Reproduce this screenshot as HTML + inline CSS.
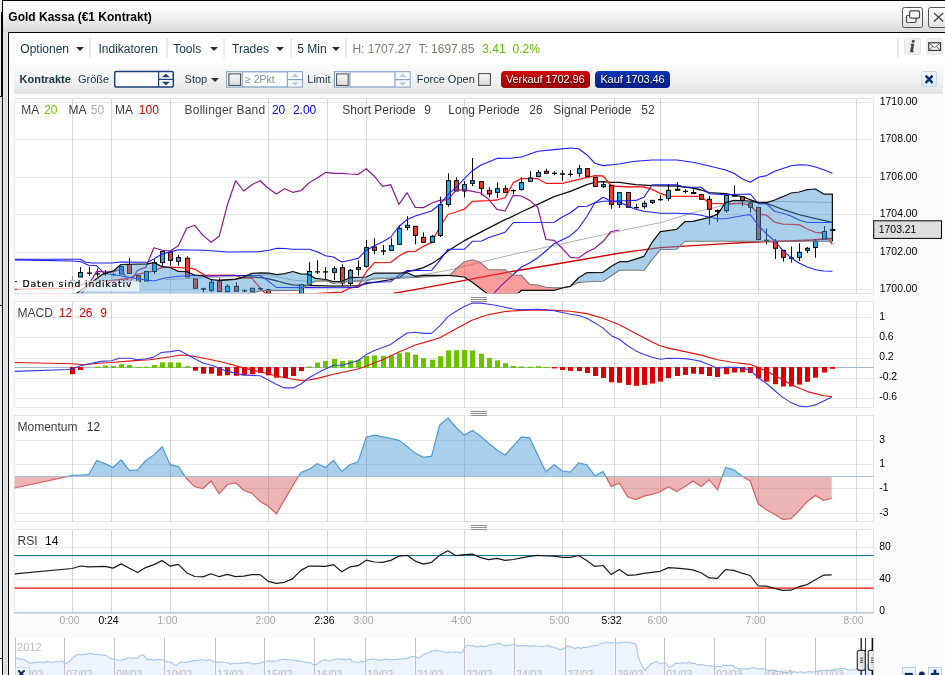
<!DOCTYPE html>
<html><head><meta charset="utf-8"><title>Gold Kassa</title>
<style>
html,body{margin:0;padding:0;}
body{width:945px;height:675px;overflow:hidden;position:relative;background:#fff;font-family:"Liberation Sans",sans-serif;font-size:12px;color:#222;}
.abs{position:absolute;}
#win{left:2px;top:0;width:960px;height:700px;border-left:1px solid #000;border-top:1px solid #000;background:#dddddd;}
#titlebar{left:3px;top:1px;width:942px;height:31px;background:linear-gradient(#ffffff 0%,#fbfbfb 25%,#ededed 60%,#d9d9d9 100%);}
#title{left:8.3px;top:10px;font-weight:bold;font-size:12px;color:#000;white-space:nowrap;}
#panel{left:8px;top:32px;width:940px;height:660px;border-left:1px solid #000;border-top:1px solid #000;background:#fbfbfb;}
#tbbg{left:9px;top:33px;width:936px;height:30px;background:#fff;}
.tb{top:42px;font-size:12px;line-height:14px;color:#123444;white-space:nowrap;}
.sep{top:38px;width:2px;height:20px;background:#ebebeb;}
.arr{width:0;height:0;border-left:4px solid transparent;border-right:4px solid transparent;border-top:4.6px solid #2e2e2e;top:46.6px;margin-left:0.3px;}
#orderbar{left:14px;top:63px;width:929px;height:31px;background:linear-gradient(#fcfcfc 0%,#f4f4f4 45%,#e3e3e3 100%);}
.ob{top:72.5px;font-size:11px;line-height:13px;color:#123444;white-space:nowrap;}
.wbtn{top:7px;height:19px;border:1px solid #555;border-radius:2.5px;background:linear-gradient(#ffffff,#e2e2e2);}
.ibtn{top:38px;width:16.5px;height:16.5px;border-radius:3px;background:#f0f0f0;border:1px solid #e6e6e6;box-sizing:border-box;}
.inp{top:70.5px;height:16.5px;border:1px solid #9ab0cf;background:#fff;}
.cb{width:11px;height:11px;border:1px solid #555;border-radius:2px;background:linear-gradient(#fdfdfd,#dadada);}
.btn{top:70.5px;height:17.5px;border-radius:4px;color:#fff;font-size:11px;line-height:17px;text-align:center;white-space:nowrap;text-shadow:0 1px 1px rgba(0,0,0,0.85);letter-spacing:-0.1px;}
#root{left:0;top:0;width:945px;height:675px;overflow:hidden;will-change:transform;}
</style></head><body>
<div id="root" class="abs">
<div id="win" class="abs"></div>
<div class="abs" style="left:0;top:0;width:2px;height:12px;background:#ececec"></div>
<div class="abs" style="left:0;top:12px;width:1px;height:84px;background:#eeeeee"></div>
<div class="abs" style="left:1px;top:12px;width:1px;height:85px;background:#000"></div>
<div class="abs" style="left:0;top:96px;width:2px;height:1px;background:#000"></div>
<div class="abs" style="left:0;top:97px;width:2px;height:208px;background:#e1e1e1"></div>
<div class="abs" style="left:0;top:305px;width:2px;height:1px;background:#000"></div>
<div class="abs" style="left:0;top:306px;width:2px;height:352px;background:#e6ecf2"></div>
<div class="abs" style="left:0;top:658px;width:2px;height:1px;background:#000"></div>
<div class="abs" style="left:0;top:659px;width:2px;height:20px;background:#fff"></div>
<div class="abs" style="left:3px;top:32px;width:1px;height:650px;background:#ececec"></div>
<div class="abs" style="left:7px;top:32px;width:1px;height:650px;background:#ececec"></div>
<div id="titlebar" class="abs"></div>
<div id="title" class="abs">Gold Kassa (€1 Kontrakt)</div>
<div class="abs wbtn" style="left:902px;width:19px;"></div>
<div class="abs wbtn" style="left:928px;width:24px;"></div>
<svg class="abs" style="left:900px;top:5px" width="45" height="26" viewBox="900 5 45 26">
<rect x="906.5" y="15.5" width="9.5" height="7" rx="1.2" fill="#f2f2f2" stroke="#444" stroke-width="1.2"/>
<rect x="909.7" y="10.8" width="9.8" height="7.4" rx="1.2" fill="#fff" stroke="#444" stroke-width="1.2"/>
<path d="M934 13 L943.2 21.5 M943.2 13 L934 21.5" stroke="#444" stroke-width="1.3" fill="none"/>
</svg>
<div id="panel" class="abs"></div>
<div id="tbbg" class="abs"></div>
<!--TOOLBAR-->
<div class="abs tb" style="left:20.3px">Optionen</div><div class="abs arr" style="left:75.4px"></div>
<div class="abs sep" style="left:88.5px"></div>
<div class="abs tb" style="left:98.5px">Indikatoren</div>
<div class="abs sep" style="left:165.5px"></div>
<div class="abs tb" style="left:173.2px">Tools</div><div class="abs arr" style="left:209.5px"></div>
<div class="abs sep" style="left:223.2px"></div>
<div class="abs tb" style="left:232px">Trades</div><div class="abs arr" style="left:275.7px"></div>
<div class="abs sep" style="left:289.6px"></div>
<div class="abs tb" style="left:297.3px">5 Min</div><div class="abs arr" style="left:331.6px"></div>
<div class="abs sep" style="left:345.2px"></div>
<div class="abs tb" style="left:352.4px;color:#7d7d6e">H: 1707.27</div>
<div class="abs tb" style="left:418.4px;color:#7d7d6e">T: 1697.85</div>
<div class="abs tb" style="left:482.3px;color:#66bb00">3.41</div>
<div class="abs tb" style="left:512.6px;color:#66bb00">0.2%</div>
<div class="abs sep" style="left:897px"></div>
<div class="abs ibtn" style="left:904.3px"></div>
<div class="abs ibtn" style="left:926.4px"></div>
<div class="abs" style="left:910px;top:38px;font-family:'Liberation Serif',serif;font-style:italic;font-weight:bold;font-size:16px;line-height:17px;color:#444;-webkit-text-stroke:0.6px #444;">i</div>
<svg class="abs" style="left:926px;top:38px" width="18" height="17" viewBox="926 38 18 17">
<rect x="928.7" y="42.8" width="11.8" height="7.6" fill="#fff" stroke="#444" stroke-width="1.3"/>
<path d="M929 43.2 L934.6 47.6 L940.2 43.2 M929 50 L933 46.4 M940.2 50 L936.2 46.4" stroke="#555" stroke-width="0.9" fill="none"/>
</svg>
<!--ORDERBAR-->
<div id="orderbar" class="abs"></div>
<div class="abs ob" style="left:19.5px;font-weight:bold">Kontrakte</div>
<div class="abs ob" style="left:78px">Größe</div>
<div class="abs ob" style="left:184.6px">Stop</div><div class="abs arr" style="left:210.6px;top:77.6px"></div>
<div class="abs ob" style="left:307.3px">Limit</div>
<div class="abs ob" style="left:416.7px">Force Open</div>
<svg class="abs" style="left:0;top:60px" width="945" height="36" viewBox="0 60 945 36">
<defs><linearGradient id="cbg" x1="0" x2="0" y1="0" y2="1"><stop offset="0" stop-color="#fbfbfb"/><stop offset="1" stop-color="#d9d9d9"/></linearGradient></defs>
<rect x="114.7" y="71.6" width="58.6" height="15.4" rx="1.5" fill="#fff" stroke="#1c3d7c" stroke-width="1.5"/>
<line x1="158.6" x2="158.6" y1="71.6" y2="87" stroke="#1c3d7c" stroke-width="1.2"/>
<line x1="158.6" x2="173.3" y1="79.4" y2="79.4" stroke="#1c3d7c" stroke-width="1.2"/>
<path d="M161.9 77.2 L165.9 73.7 L169.9 77.2 Z M161.9 81.8 L165.9 85.3 L169.9 81.8 Z" fill="#1c3d7c"/>
<g>
<rect x="226.7" y="71.8" width="75.6" height="15.2" fill="#fff" stroke="#7f9cc6" stroke-width="1.2"/>
<rect x="227.3" y="72.4" width="14.6" height="14" fill="#eef2f8"/>
<line x1="242.2" x2="242.2" y1="71.8" y2="87" stroke="#7f9cc6" stroke-width="1.1"/>
<rect x="228.9" y="73.9" width="11.6" height="11.6" fill="url(#cbg)" stroke="#555" stroke-width="1.1"/>
<rect x="287.8" y="72.4" width="14" height="14" fill="#f6f8fb"/>
<line x1="287.3" x2="287.3" y1="71.8" y2="87" stroke="#7f9cc6" stroke-width="1.1"/>
<line x1="287.3" x2="302.3" y1="79.6" y2="79.6" stroke="#7f9cc6" stroke-width="1.1"/>
<path d="M291.2 77 L295 73.8 L298.8 77 Z M291.2 82.2 L295 85.4 L298.8 82.2 Z" fill="#b9c7da"/>
</g>
<g transform="translate(107.7 0)">
<rect x="226.7" y="71.8" width="75.6" height="15.2" fill="#fff" stroke="#7f9cc6" stroke-width="1.2"/>
<rect x="227.3" y="72.4" width="14.6" height="14" fill="#eef2f8"/>
<line x1="242.2" x2="242.2" y1="71.8" y2="87" stroke="#7f9cc6" stroke-width="1.1"/>
<rect x="228.9" y="73.9" width="11.6" height="11.6" fill="url(#cbg)" stroke="#555" stroke-width="1.1"/>
<rect x="287.8" y="72.4" width="14" height="14" fill="#f6f8fb"/>
<line x1="287.3" x2="287.3" y1="71.8" y2="87" stroke="#7f9cc6" stroke-width="1.1"/>
<line x1="287.3" x2="302.3" y1="79.6" y2="79.6" stroke="#7f9cc6" stroke-width="1.1"/>
<path d="M291.2 77 L295 73.8 L298.8 77 Z M291.2 82.2 L295 85.4 L298.8 82.2 Z" fill="#b9c7da"/>
</g>
<rect x="478.6" y="73.6" width="11.8" height="11.8" fill="url(#cbg)" stroke="#555" stroke-width="1.1"/>
</svg>
<div class="abs ob" style="left:245px;color:#7d9499;font-size:10.5px">≥ 2Pkt</div>
<div class="abs btn" style="left:500.5px;width:89.5px;background:linear-gradient(#d00c0c,#9a0000);">Verkauf 1702.96</div>
<div class="abs btn" style="left:595px;width:75px;background:linear-gradient(#0d38b4,#041e84);">Kauf 1703.46</div>
<div class="abs" style="left:921px;top:71px;width:14px;height:14px;border:1px solid #c3d9ee;border-radius:2px;box-sizing:content-box;background:linear-gradient(#f4f9fd,#d6e6f5);"></div>
<svg class="abs" style="left:921px;top:71px" width="17" height="17" viewBox="921 71 17 17">
<path d="M925.6 75.6 L932.6 82.8 M932.6 75.6 L925.6 82.8" stroke="#0c2a66" stroke-width="2.4" fill="none"/>
</svg>
<svg class="abs" style="left:0;top:0" width="945" height="675" viewBox="0 0 945 675" font-family="Liberation Sans, sans-serif">
<defs><clipPath id="cm"><rect x="14.5" y="98.5" width="859" height="194.8"/></clipPath></defs>
<rect x="14.5" y="98.5" width="859" height="195" fill="#fff" stroke="#e6e6e6" stroke-width="1" shape-rendering="crispEdges"/>
<line x1="14.5" x2="873.5" y1="102.5" y2="102.5" stroke="#e6e6e6" stroke-width="1" shape-rendering="crispEdges"/>
<line x1="14.5" x2="873.5" y1="139.5" y2="139.5" stroke="#e6e6e6" stroke-width="1" shape-rendering="crispEdges"/>
<line x1="14.5" x2="873.5" y1="177.5" y2="177.5" stroke="#e6e6e6" stroke-width="1" shape-rendering="crispEdges"/>
<line x1="14.5" x2="873.5" y1="214.5" y2="214.5" stroke="#e6e6e6" stroke-width="1" shape-rendering="crispEdges"/>
<line x1="14.5" x2="873.5" y1="252.5" y2="252.5" stroke="#e6e6e6" stroke-width="1" shape-rendering="crispEdges"/>
<line x1="14.5" x2="873.5" y1="289.5" y2="289.5" stroke="#e6e6e6" stroke-width="1" shape-rendering="crispEdges"/>
<line x1="72.5" x2="72.5" y1="98.5" y2="293.5" stroke="#d6d6d6" stroke-width="1" shape-rendering="crispEdges"/>
<line x1="111.5" x2="111.5" y1="98.5" y2="293.5" stroke="#d6d6d6" stroke-width="1" shape-rendering="crispEdges"/>
<line x1="170.5" x2="170.5" y1="98.5" y2="293.5" stroke="#d6d6d6" stroke-width="1" shape-rendering="crispEdges"/>
<line x1="268.5" x2="268.5" y1="98.5" y2="293.5" stroke="#d6d6d6" stroke-width="1" shape-rendering="crispEdges"/>
<line x1="327.5" x2="327.5" y1="98.5" y2="293.5" stroke="#d6d6d6" stroke-width="1" shape-rendering="crispEdges"/>
<line x1="366.5" x2="366.5" y1="98.5" y2="293.5" stroke="#d6d6d6" stroke-width="1" shape-rendering="crispEdges"/>
<line x1="464.5" x2="464.5" y1="98.5" y2="293.5" stroke="#d6d6d6" stroke-width="1" shape-rendering="crispEdges"/>
<line x1="562.5" x2="562.5" y1="98.5" y2="293.5" stroke="#d6d6d6" stroke-width="1" shape-rendering="crispEdges"/>
<line x1="614.5" x2="614.5" y1="98.5" y2="293.5" stroke="#d6d6d6" stroke-width="1" shape-rendering="crispEdges"/>
<line x1="660.5" x2="660.5" y1="98.5" y2="293.5" stroke="#d6d6d6" stroke-width="1" shape-rendering="crispEdges"/>
<line x1="758.5" x2="758.5" y1="98.5" y2="293.5" stroke="#d6d6d6" stroke-width="1" shape-rendering="crispEdges"/>
<line x1="856.5" x2="856.5" y1="98.5" y2="293.5" stroke="#d6d6d6" stroke-width="1" shape-rendering="crispEdges"/>
<rect x="14.5" y="301.5" width="859" height="106" fill="#fff" stroke="#e6e6e6" stroke-width="1" shape-rendering="crispEdges"/>
<line x1="14.5" x2="873.5" y1="317.5" y2="317.5" stroke="#e6e6e6" stroke-width="1" shape-rendering="crispEdges"/>
<line x1="14.5" x2="873.5" y1="337.5" y2="337.5" stroke="#e6e6e6" stroke-width="1" shape-rendering="crispEdges"/>
<line x1="14.5" x2="873.5" y1="358.5" y2="358.5" stroke="#e6e6e6" stroke-width="1" shape-rendering="crispEdges"/>
<line x1="14.5" x2="873.5" y1="378.5" y2="378.5" stroke="#e6e6e6" stroke-width="1" shape-rendering="crispEdges"/>
<line x1="14.5" x2="873.5" y1="398.5" y2="398.5" stroke="#e6e6e6" stroke-width="1" shape-rendering="crispEdges"/>
<line x1="72.5" x2="72.5" y1="301.5" y2="407.5" stroke="#d6d6d6" stroke-width="1" shape-rendering="crispEdges"/>
<line x1="111.5" x2="111.5" y1="301.5" y2="407.5" stroke="#d6d6d6" stroke-width="1" shape-rendering="crispEdges"/>
<line x1="170.5" x2="170.5" y1="301.5" y2="407.5" stroke="#d6d6d6" stroke-width="1" shape-rendering="crispEdges"/>
<line x1="268.5" x2="268.5" y1="301.5" y2="407.5" stroke="#d6d6d6" stroke-width="1" shape-rendering="crispEdges"/>
<line x1="327.5" x2="327.5" y1="301.5" y2="407.5" stroke="#d6d6d6" stroke-width="1" shape-rendering="crispEdges"/>
<line x1="366.5" x2="366.5" y1="301.5" y2="407.5" stroke="#d6d6d6" stroke-width="1" shape-rendering="crispEdges"/>
<line x1="464.5" x2="464.5" y1="301.5" y2="407.5" stroke="#d6d6d6" stroke-width="1" shape-rendering="crispEdges"/>
<line x1="562.5" x2="562.5" y1="301.5" y2="407.5" stroke="#d6d6d6" stroke-width="1" shape-rendering="crispEdges"/>
<line x1="614.5" x2="614.5" y1="301.5" y2="407.5" stroke="#d6d6d6" stroke-width="1" shape-rendering="crispEdges"/>
<line x1="660.5" x2="660.5" y1="301.5" y2="407.5" stroke="#d6d6d6" stroke-width="1" shape-rendering="crispEdges"/>
<line x1="758.5" x2="758.5" y1="301.5" y2="407.5" stroke="#d6d6d6" stroke-width="1" shape-rendering="crispEdges"/>
<line x1="856.5" x2="856.5" y1="301.5" y2="407.5" stroke="#d6d6d6" stroke-width="1" shape-rendering="crispEdges"/>
<rect x="14.5" y="415.5" width="859" height="106" fill="#fff" stroke="#e6e6e6" stroke-width="1" shape-rendering="crispEdges"/>
<line x1="14.5" x2="873.5" y1="440.5" y2="440.5" stroke="#e6e6e6" stroke-width="1" shape-rendering="crispEdges"/>
<line x1="14.5" x2="873.5" y1="464.5" y2="464.5" stroke="#e6e6e6" stroke-width="1" shape-rendering="crispEdges"/>
<line x1="14.5" x2="873.5" y1="488.5" y2="488.5" stroke="#e6e6e6" stroke-width="1" shape-rendering="crispEdges"/>
<line x1="14.5" x2="873.5" y1="513.5" y2="513.5" stroke="#e6e6e6" stroke-width="1" shape-rendering="crispEdges"/>
<line x1="72.5" x2="72.5" y1="415.5" y2="521.5" stroke="#d6d6d6" stroke-width="1" shape-rendering="crispEdges"/>
<line x1="111.5" x2="111.5" y1="415.5" y2="521.5" stroke="#d6d6d6" stroke-width="1" shape-rendering="crispEdges"/>
<line x1="170.5" x2="170.5" y1="415.5" y2="521.5" stroke="#d6d6d6" stroke-width="1" shape-rendering="crispEdges"/>
<line x1="268.5" x2="268.5" y1="415.5" y2="521.5" stroke="#d6d6d6" stroke-width="1" shape-rendering="crispEdges"/>
<line x1="327.5" x2="327.5" y1="415.5" y2="521.5" stroke="#d6d6d6" stroke-width="1" shape-rendering="crispEdges"/>
<line x1="366.5" x2="366.5" y1="415.5" y2="521.5" stroke="#d6d6d6" stroke-width="1" shape-rendering="crispEdges"/>
<line x1="464.5" x2="464.5" y1="415.5" y2="521.5" stroke="#d6d6d6" stroke-width="1" shape-rendering="crispEdges"/>
<line x1="562.5" x2="562.5" y1="415.5" y2="521.5" stroke="#d6d6d6" stroke-width="1" shape-rendering="crispEdges"/>
<line x1="614.5" x2="614.5" y1="415.5" y2="521.5" stroke="#d6d6d6" stroke-width="1" shape-rendering="crispEdges"/>
<line x1="660.5" x2="660.5" y1="415.5" y2="521.5" stroke="#d6d6d6" stroke-width="1" shape-rendering="crispEdges"/>
<line x1="758.5" x2="758.5" y1="415.5" y2="521.5" stroke="#d6d6d6" stroke-width="1" shape-rendering="crispEdges"/>
<line x1="856.5" x2="856.5" y1="415.5" y2="521.5" stroke="#d6d6d6" stroke-width="1" shape-rendering="crispEdges"/>
<rect x="14.5" y="529.5" width="859" height="83" fill="#fff" stroke="#e6e6e6" stroke-width="1" shape-rendering="crispEdges"/>
<line x1="14.5" x2="873.5" y1="547.5" y2="547.5" stroke="#e6e6e6" stroke-width="1" shape-rendering="crispEdges"/>
<line x1="14.5" x2="873.5" y1="579.5" y2="579.5" stroke="#e6e6e6" stroke-width="1" shape-rendering="crispEdges"/>
<line x1="72.5" x2="72.5" y1="529.5" y2="612.5" stroke="#d6d6d6" stroke-width="1" shape-rendering="crispEdges"/>
<line x1="111.5" x2="111.5" y1="529.5" y2="612.5" stroke="#d6d6d6" stroke-width="1" shape-rendering="crispEdges"/>
<line x1="170.5" x2="170.5" y1="529.5" y2="612.5" stroke="#d6d6d6" stroke-width="1" shape-rendering="crispEdges"/>
<line x1="268.5" x2="268.5" y1="529.5" y2="612.5" stroke="#d6d6d6" stroke-width="1" shape-rendering="crispEdges"/>
<line x1="327.5" x2="327.5" y1="529.5" y2="612.5" stroke="#d6d6d6" stroke-width="1" shape-rendering="crispEdges"/>
<line x1="366.5" x2="366.5" y1="529.5" y2="612.5" stroke="#d6d6d6" stroke-width="1" shape-rendering="crispEdges"/>
<line x1="464.5" x2="464.5" y1="529.5" y2="612.5" stroke="#d6d6d6" stroke-width="1" shape-rendering="crispEdges"/>
<line x1="562.5" x2="562.5" y1="529.5" y2="612.5" stroke="#d6d6d6" stroke-width="1" shape-rendering="crispEdges"/>
<line x1="614.5" x2="614.5" y1="529.5" y2="612.5" stroke="#d6d6d6" stroke-width="1" shape-rendering="crispEdges"/>
<line x1="660.5" x2="660.5" y1="529.5" y2="612.5" stroke="#d6d6d6" stroke-width="1" shape-rendering="crispEdges"/>
<line x1="758.5" x2="758.5" y1="529.5" y2="612.5" stroke="#d6d6d6" stroke-width="1" shape-rendering="crispEdges"/>
<line x1="856.5" x2="856.5" y1="529.5" y2="612.5" stroke="#d6d6d6" stroke-width="1" shape-rendering="crispEdges"/>
<line x1="14.5" x2="873.5" y1="612.8" y2="612.8" stroke="#aebfd2" stroke-width="1.2"/>
<g clip-path="url(#cm)">
<polyline points="165.0,279.5 200.0,278.0 245.0,276.0 268.9,274.7 277.3,276.8 292.7,280.0 308.0,281.6 340.0,281.5 365.3,280.0 398.0,277.5 421.7,275.0 448.3,270.3 464.3,266.3 488.3,260.3 515.0,254.0 562.3,243.7 614.4,232.3 630.0,228.7 660.3,222.7 693.0,212.7 721.0,206.0 740.0,203.0 766.7,201.3 832.4,202.4" fill="none" stroke="#a8a8a8" stroke-width="0.9" stroke-linejoin="round" />
<polyline points="393.0,293.5 421.7,288.3 448.3,283.4 475.0,278.3 501.7,273.3 515.0,271.0 562.3,263.0 614.4,254.0 630.0,251.6 660.3,247.7 693.0,245.7 725.6,243.7 745.0,242.5 775.0,241.5 812.0,240.0 832.4,238.5" fill="none" stroke="#d40000" stroke-width="1.3" stroke-linejoin="round" />
<polyline points="219.3,280.3 235.4,279.2 245.0,277.5 250.9,276.8 260.4,277.7 268.9,278.9 277.3,281.0 284.7,283.2 292.7,284.8 300.6,285.3 308.7,285.5 326.0,285.8 335.0,286.1 358.1,285.7 366.7,283.7 390.7,279.7 400.0,277.0 407.1,271.7 415.3,270.0 423.4,267.7 431.6,263.7 439.8,258.3 447.9,251.0 456.0,245.7 464.3,240.7 481.7,231.7 505.0,219.7 510.0,217.6 521.4,212.0 537.8,204.3 554.1,196.7 570.4,191.3 586.8,184.7 594.9,182.4 603.1,181.6 611.3,182.4 619.4,182.4 630.0,183.8 635.8,184.7 652.1,185.7 676.6,186.0 693.0,188.0 701.1,190.0 709.3,192.7 725.6,193.7 742.0,196.7 758.4,202.7 766.7,203.3 782.8,209.3 799.0,214.7 815.5,218.7 832.4,222.3" fill="none" stroke="#111" stroke-width="1.3" stroke-linejoin="round" />
<polyline points="14.9,289.2 72.2,288.2 76.5,286.1 85.4,283.6 128.6,278.5 136.2,274.7 154.0,270.9 161.6,267.7 170.5,267.2 191.7,268.3 195.7,269.7 205.0,275.4 235.0,275.2 241.3,277.9 252.0,278.4 256.2,283.2 261.5,289.7 266.0,294.0 311.2,294.0 335.0,292.5 341.3,292.3 349.9,288.0 358.1,286.3 366.3,271.7 374.4,262.6 390.8,262.3 398.9,256.0 407.1,251.7 415.3,251.4 423.4,246.3 431.6,242.3 439.8,227.0 447.9,214.5 456.1,212.0 464.3,209.2 472.4,201.3 488.8,200.7 496.9,200.0 505.1,197.6 513.3,182.7 521.4,178.7 537.8,178.7 545.9,183.3 562.3,183.3 570.4,181.3 594.9,175.7 603.1,176.0 611.3,186.0 630.0,187.0 635.8,186.7 644.0,187.0 652.1,189.3 660.3,193.3 668.5,196.4 701.1,196.4 709.3,203.3 725.6,203.6 742.0,203.4 750.3,205.3 758.4,214.3 766.7,215.2 774.7,222.2 782.8,224.2 799.0,224.7 807.3,229.0 815.5,232.3 823.6,233.0 832.4,244.3" fill="none" stroke="#ff1a1a" stroke-width="1.3" stroke-linejoin="round" />
<g opacity="0.3">
<line x1="72.5" x2="72.5" y1="275.9" y2="283.4" stroke="#000" stroke-width="1"/>
<rect x="70.5" y="280.3" width="4" height="3.1" fill="#17aef0" stroke="#000" stroke-width="1"/>
</g>
<line x1="80.5" x2="80.5" y1="267" y2="277" stroke="#000" stroke-width="1"/>
<rect x="78.5" y="272.5" width="4" height="4.5" fill="#17aef0" stroke="#000" stroke-width="1"/>
<line x1="89.5" x2="89.5" y1="267" y2="276" stroke="#000" stroke-width="1"/>
<line x1="87" x2="92" y1="273.2" y2="273.2" stroke="#000" stroke-width="1.3"/>
<line x1="97.5" x2="97.5" y1="268.3" y2="276.6" stroke="#000" stroke-width="1"/>
<line x1="95" x2="100" y1="273.8" y2="273.8" stroke="#000" stroke-width="1.3"/>
<line x1="105.5" x2="105.5" y1="270" y2="276" stroke="#000" stroke-width="1"/>
<line x1="103" x2="108" y1="273.4" y2="273.4" stroke="#000" stroke-width="1.3"/>
<line x1="113.5" x2="113.5" y1="273" y2="276" stroke="#000" stroke-width="1"/>
<line x1="111" x2="116" y1="274.7" y2="274.7" stroke="#000" stroke-width="1.3"/>
<line x1="121.5" x2="121.5" y1="266.4" y2="274" stroke="#000" stroke-width="1"/>
<rect x="119.5" y="266.4" width="4" height="7.6" fill="#17aef0" stroke="#000" stroke-width="1"/>
<line x1="129.5" x2="129.5" y1="258.2" y2="273.4" stroke="#000" stroke-width="1"/>
<rect x="127.5" y="264.5" width="4" height="8.9" fill="#ee3b2f" stroke="#000" stroke-width="1"/>
<line x1="138.5" x2="138.5" y1="275.7" y2="281.7" stroke="#000" stroke-width="1"/>
<rect x="136.5" y="275.7" width="4" height="6" fill="#ee3b2f" stroke="#000" stroke-width="1"/>
<line x1="146.5" x2="146.5" y1="271.5" y2="281" stroke="#000" stroke-width="1"/>
<rect x="144.5" y="271.5" width="4" height="9.5" fill="#17aef0" stroke="#000" stroke-width="1"/>
<line x1="154.5" x2="154.5" y1="259.4" y2="274" stroke="#000" stroke-width="1"/>
<rect x="152.5" y="262.6" width="4" height="8.9" fill="#17aef0" stroke="#000" stroke-width="1"/>
<line x1="162.5" x2="162.5" y1="251.6" y2="265.8" stroke="#000" stroke-width="1"/>
<rect x="160.5" y="251.6" width="4" height="11" fill="#17aef0" stroke="#000" stroke-width="1"/>
<line x1="170.5" x2="170.5" y1="250.5" y2="265.7" stroke="#000" stroke-width="1"/>
<rect x="168.5" y="252" width="4" height="8.3" fill="#ee3b2f" stroke="#000" stroke-width="1"/>
<line x1="178.5" x2="178.5" y1="255.2" y2="265.7" stroke="#000" stroke-width="1"/>
<rect x="176.5" y="257.6" width="4" height="3.7" fill="#17aef0" stroke="#000" stroke-width="1"/>
<line x1="187.5" x2="187.5" y1="256.3" y2="277" stroke="#000" stroke-width="1"/>
<rect x="185.5" y="258.3" width="4" height="18.7" fill="#ee3b2f" stroke="#000" stroke-width="1"/>
<line x1="195.5" x2="195.5" y1="279" y2="288.3" stroke="#000" stroke-width="1"/>
<rect x="193.5" y="279" width="4" height="9.3" fill="#ee3b2f" stroke="#000" stroke-width="1"/>
<line x1="203.5" x2="203.5" y1="287.7" y2="292.3" stroke="#000" stroke-width="1"/>
<line x1="201" x2="206" y1="289" y2="289" stroke="#000" stroke-width="1.3"/>
<line x1="211.5" x2="211.5" y1="279.7" y2="292.3" stroke="#000" stroke-width="1"/>
<rect x="209.5" y="282.3" width="4" height="8" fill="#17aef0" stroke="#000" stroke-width="1"/>
<line x1="219.5" x2="219.5" y1="278.3" y2="291.4" stroke="#000" stroke-width="1"/>
<rect x="217.5" y="281" width="4" height="10.4" fill="#ee3b2f" stroke="#000" stroke-width="1"/>
<line x1="227.5" x2="227.5" y1="284.3" y2="291.7" stroke="#000" stroke-width="1"/>
<rect x="225.5" y="286.3" width="4" height="5.4" fill="#17aef0" stroke="#000" stroke-width="1"/>
<line x1="236.5" x2="236.5" y1="282.3" y2="291.2" stroke="#000" stroke-width="1"/>
<rect x="234.5" y="286.3" width="4" height="4.9" fill="#ee3b2f" stroke="#000" stroke-width="1"/>
<line x1="244.5" x2="244.5" y1="289.5" y2="292" stroke="#000" stroke-width="1"/>
<line x1="242" x2="247" y1="290.9" y2="290.9" stroke="#000" stroke-width="1.3"/>
<line x1="252.5" x2="252.5" y1="288.3" y2="291.3" stroke="#000" stroke-width="1"/>
<rect x="250.5" y="288.3" width="4" height="3" fill="#17aef0" stroke="#000" stroke-width="1"/>
<line x1="260.5" x2="260.5" y1="287.3" y2="290" stroke="#000" stroke-width="1"/>
<line x1="258" x2="263" y1="288.6" y2="288.6" stroke="#000" stroke-width="1.3"/>
<line x1="268.5" x2="268.5" y1="289.7" y2="297" stroke="#000" stroke-width="1"/>
<rect x="266.5" y="289.7" width="4" height="7.3" fill="#ee3b2f" stroke="#000" stroke-width="1"/>
<line x1="276.5" x2="276.5" y1="296" y2="299" stroke="#000" stroke-width="1"/>
<rect x="274.5" y="296" width="4" height="3" fill="#ee3b2f" stroke="#000" stroke-width="1"/>
<line x1="285.5" x2="285.5" y1="296" y2="299" stroke="#000" stroke-width="1"/>
<rect x="283.5" y="296" width="4" height="3" fill="#17aef0" stroke="#000" stroke-width="1"/>
<line x1="293.5" x2="293.5" y1="295" y2="299" stroke="#000" stroke-width="1"/>
<rect x="291.5" y="295" width="4" height="4" fill="#17aef0" stroke="#000" stroke-width="1"/>
<line x1="301.5" x2="301.5" y1="284" y2="296" stroke="#000" stroke-width="1"/>
<rect x="299.5" y="284.8" width="4" height="11.2" fill="#17aef0" stroke="#000" stroke-width="1"/>
<line x1="309.5" x2="309.5" y1="262.3" y2="286" stroke="#000" stroke-width="1"/>
<rect x="307.5" y="271.4" width="4" height="12.9" fill="#17aef0" stroke="#000" stroke-width="1"/>
<line x1="317.5" x2="317.5" y1="260.3" y2="273.7" stroke="#000" stroke-width="1"/>
<line x1="315" x2="320" y1="271.8" y2="271.8" stroke="#000" stroke-width="1.3"/>
<line x1="325.5" x2="325.5" y1="267" y2="279.7" stroke="#000" stroke-width="1"/>
<line x1="323" x2="328" y1="271.9" y2="271.9" stroke="#000" stroke-width="1.3"/>
<line x1="334.5" x2="334.5" y1="266.3" y2="280.3" stroke="#000" stroke-width="1"/>
<rect x="332.5" y="268.8" width="4" height="3.5" fill="#17aef0" stroke="#000" stroke-width="1"/>
<line x1="342.5" x2="342.5" y1="264.3" y2="286.3" stroke="#000" stroke-width="1"/>
<rect x="340.5" y="267.7" width="4" height="15.3" fill="#ee3b2f" stroke="#000" stroke-width="1"/>
<line x1="350.5" x2="350.5" y1="269" y2="286.3" stroke="#000" stroke-width="1"/>
<rect x="348.5" y="270.3" width="4" height="13.1" fill="#17aef0" stroke="#000" stroke-width="1"/>
<line x1="358.5" x2="358.5" y1="260.3" y2="275.7" stroke="#000" stroke-width="1"/>
<rect x="356.5" y="267.4" width="4" height="1.9" fill="#17aef0" stroke="#000" stroke-width="1"/>
<line x1="366.5" x2="366.5" y1="240" y2="267.7" stroke="#000" stroke-width="1"/>
<rect x="364.5" y="247.7" width="4" height="18.6" fill="#17aef0" stroke="#000" stroke-width="1"/>
<line x1="374.5" x2="374.5" y1="238.3" y2="254.3" stroke="#000" stroke-width="1"/>
<rect x="372.5" y="247" width="4" height="3.3" fill="#ee3b2f" stroke="#000" stroke-width="1"/>
<line x1="383.5" x2="383.5" y1="245" y2="255" stroke="#000" stroke-width="1"/>
<line x1="381" x2="386" y1="251" y2="251" stroke="#000" stroke-width="1.3"/>
<line x1="391.5" x2="391.5" y1="238.3" y2="250.3" stroke="#000" stroke-width="1"/>
<rect x="389.5" y="245.7" width="4" height="4.6" fill="#17aef0" stroke="#000" stroke-width="1"/>
<line x1="399.5" x2="399.5" y1="225" y2="244.3" stroke="#000" stroke-width="1"/>
<rect x="397.5" y="228.3" width="4" height="16" fill="#17aef0" stroke="#000" stroke-width="1"/>
<line x1="407.5" x2="407.5" y1="216.3" y2="230.3" stroke="#000" stroke-width="1"/>
<rect x="405.5" y="225.3" width="4" height="2.1" fill="#17aef0" stroke="#000" stroke-width="1"/>
<line x1="415.5" x2="415.5" y1="226.3" y2="244.3" stroke="#000" stroke-width="1"/>
<rect x="413.5" y="226.3" width="4" height="9.1" fill="#ee3b2f" stroke="#000" stroke-width="1"/>
<line x1="423.5" x2="423.5" y1="232.3" y2="242.3" stroke="#000" stroke-width="1"/>
<rect x="421.5" y="237.4" width="4" height="4.9" fill="#ee3b2f" stroke="#000" stroke-width="1"/>
<line x1="432.5" x2="432.5" y1="235" y2="242.3" stroke="#000" stroke-width="1"/>
<rect x="430.5" y="236.3" width="4" height="6" fill="#17aef0" stroke="#000" stroke-width="1"/>
<line x1="440.5" x2="440.5" y1="196.7" y2="237" stroke="#000" stroke-width="1"/>
<rect x="438.5" y="204.7" width="4" height="30.7" fill="#17aef0" stroke="#000" stroke-width="1"/>
<line x1="448.5" x2="448.5" y1="173.3" y2="206.7" stroke="#000" stroke-width="1"/>
<rect x="446.5" y="180.7" width="4" height="23.7" fill="#17aef0" stroke="#000" stroke-width="1"/>
<line x1="456.5" x2="456.5" y1="177.3" y2="191" stroke="#000" stroke-width="1"/>
<rect x="454.5" y="180.7" width="4" height="10.3" fill="#ee3b2f" stroke="#000" stroke-width="1"/>
<line x1="464.5" x2="464.5" y1="181.3" y2="197.3" stroke="#000" stroke-width="1"/>
<rect x="462.5" y="184.7" width="4" height="6.3" fill="#17aef0" stroke="#000" stroke-width="1"/>
<line x1="472.5" x2="472.5" y1="158" y2="186" stroke="#000" stroke-width="1"/>
<rect x="470.5" y="180.7" width="4" height="2.6" fill="#17aef0" stroke="#000" stroke-width="1"/>
<line x1="481.5" x2="481.5" y1="181.6" y2="195.3" stroke="#000" stroke-width="1"/>
<rect x="479.5" y="181.6" width="4" height="6.7" fill="#ee3b2f" stroke="#000" stroke-width="1"/>
<line x1="489.5" x2="489.5" y1="187.3" y2="197.3" stroke="#000" stroke-width="1"/>
<rect x="487.5" y="190.4" width="4" height="3.6" fill="#ee3b2f" stroke="#000" stroke-width="1"/>
<line x1="497.5" x2="497.5" y1="182.4" y2="198" stroke="#000" stroke-width="1"/>
<rect x="495.5" y="188.7" width="4" height="3.6" fill="#17aef0" stroke="#000" stroke-width="1"/>
<line x1="505.5" x2="505.5" y1="185.3" y2="192.7" stroke="#000" stroke-width="1"/>
<rect x="503.5" y="188.7" width="4" height="3.6" fill="#ee3b2f" stroke="#000" stroke-width="1"/>
<line x1="513.5" x2="513.5" y1="189.3" y2="194" stroke="#000" stroke-width="1"/>
<line x1="511" x2="516" y1="190.7" y2="190.7" stroke="#000" stroke-width="1.3"/>
<line x1="521.5" x2="521.5" y1="177.3" y2="190.7" stroke="#000" stroke-width="1"/>
<rect x="519.5" y="182.7" width="4" height="6.9" fill="#17aef0" stroke="#000" stroke-width="1"/>
<line x1="530.5" x2="530.5" y1="171.3" y2="181.3" stroke="#000" stroke-width="1"/>
<rect x="528.5" y="178" width="4" height="3.3" fill="#17aef0" stroke="#000" stroke-width="1"/>
<line x1="538.5" x2="538.5" y1="170" y2="176.4" stroke="#000" stroke-width="1"/>
<rect x="536.5" y="172.4" width="4" height="4" fill="#17aef0" stroke="#000" stroke-width="1"/>
<line x1="546.5" x2="546.5" y1="168.7" y2="173.3" stroke="#000" stroke-width="1"/>
<rect x="544.5" y="171.3" width="4" height="2" fill="#ee3b2f" stroke="#000" stroke-width="1"/>
<line x1="554.5" x2="554.5" y1="171.3" y2="175.3" stroke="#000" stroke-width="1"/>
<line x1="552" x2="557" y1="173.3" y2="173.3" stroke="#000" stroke-width="1.3"/>
<line x1="562.5" x2="562.5" y1="170" y2="180.7" stroke="#000" stroke-width="1"/>
<line x1="560" x2="565" y1="174" y2="174" stroke="#000" stroke-width="1.3"/>
<line x1="570.5" x2="570.5" y1="170" y2="176.7" stroke="#000" stroke-width="1"/>
<line x1="568" x2="573" y1="174.4" y2="174.4" stroke="#000" stroke-width="1.3"/>
<line x1="579.5" x2="579.5" y1="164.7" y2="176.7" stroke="#000" stroke-width="1"/>
<rect x="577.5" y="168.7" width="4" height="4.6" fill="#17aef0" stroke="#000" stroke-width="1"/>
<line x1="587.5" x2="587.5" y1="168.7" y2="176.3" stroke="#000" stroke-width="1"/>
<rect x="585.5" y="168.7" width="4" height="7.6" fill="#ee3b2f" stroke="#000" stroke-width="1"/>
<line x1="595.5" x2="595.5" y1="177.3" y2="186.4" stroke="#000" stroke-width="1"/>
<rect x="593.5" y="177.3" width="4" height="9.1" fill="#ee3b2f" stroke="#000" stroke-width="1"/>
<line x1="603.5" x2="603.5" y1="181.3" y2="188" stroke="#000" stroke-width="1"/>
<rect x="601.5" y="184.7" width="4" height="2" fill="#17aef0" stroke="#000" stroke-width="1"/>
<line x1="611.5" x2="611.5" y1="185.3" y2="208.7" stroke="#000" stroke-width="1"/>
<rect x="609.5" y="185.3" width="4" height="19" fill="#ee3b2f" stroke="#000" stroke-width="1"/>
<line x1="619.5" x2="619.5" y1="192.7" y2="208" stroke="#000" stroke-width="1"/>
<rect x="617.5" y="192.7" width="4" height="11.6" fill="#17aef0" stroke="#000" stroke-width="1"/>
<line x1="628.5" x2="628.5" y1="192.5" y2="207.3" stroke="#000" stroke-width="1"/>
<rect x="626.5" y="192.5" width="4" height="14.8" fill="#ee3b2f" stroke="#000" stroke-width="1"/>
<line x1="636.5" x2="636.5" y1="204" y2="208.7" stroke="#000" stroke-width="1"/>
<line x1="634" x2="639" y1="207.6" y2="207.6" stroke="#000" stroke-width="1.3"/>
<line x1="644.5" x2="644.5" y1="200.7" y2="208.7" stroke="#000" stroke-width="1"/>
<rect x="642.5" y="203.3" width="4" height="3.4" fill="#17aef0" stroke="#000" stroke-width="1"/>
<line x1="652.5" x2="652.5" y1="200.4" y2="204" stroke="#000" stroke-width="1"/>
<rect x="650.5" y="200.4" width="4" height="1.9" fill="#17aef0" stroke="#000" stroke-width="1"/>
<line x1="660.5" x2="660.5" y1="195.3" y2="200.7" stroke="#000" stroke-width="1"/>
<line x1="658" x2="663" y1="199.6" y2="199.6" stroke="#000" stroke-width="1.3"/>
<line x1="668.5" x2="668.5" y1="184" y2="200.7" stroke="#000" stroke-width="1"/>
<rect x="666.5" y="190.3" width="4" height="8" fill="#17aef0" stroke="#000" stroke-width="1"/>
<line x1="677.5" x2="677.5" y1="182" y2="190.5" stroke="#000" stroke-width="1"/>
<line x1="675" x2="680.3" y1="189.7" y2="189.7" stroke="#000" stroke-width="2"/>
<line x1="685.5" x2="685.5" y1="189.3" y2="193.3" stroke="#000" stroke-width="1"/>
<line x1="683" x2="688" y1="191.3" y2="191.3" stroke="#000" stroke-width="1.3"/>
<line x1="693.5" x2="693.5" y1="189.3" y2="194" stroke="#000" stroke-width="1"/>
<line x1="691" x2="696.3" y1="193" y2="193" stroke="#000" stroke-width="2"/>
<line x1="701.5" x2="701.5" y1="194.7" y2="199.3" stroke="#000" stroke-width="1"/>
<rect x="699.5" y="194.7" width="4" height="4.6" fill="#ee3b2f" stroke="#000" stroke-width="1"/>
<line x1="709.5" x2="709.5" y1="196" y2="224.7" stroke="#000" stroke-width="1"/>
<rect x="707.5" y="199.3" width="4" height="10" fill="#ee3b2f" stroke="#000" stroke-width="1"/>
<line x1="717.5" x2="717.5" y1="209.3" y2="222" stroke="#000" stroke-width="1"/>
<line x1="715" x2="720.3" y1="211" y2="211" stroke="#000" stroke-width="2"/>
<line x1="726.5" x2="726.5" y1="195.3" y2="213" stroke="#000" stroke-width="1"/>
<rect x="724.5" y="195.3" width="4" height="15.4" fill="#17aef0" stroke="#000" stroke-width="1"/>
<line x1="734.5" x2="734.5" y1="185.3" y2="196.5" stroke="#000" stroke-width="1"/>
<line x1="732" x2="737" y1="196" y2="196" stroke="#000" stroke-width="1.3"/>
<line x1="742.5" x2="742.5" y1="196.7" y2="206" stroke="#000" stroke-width="1"/>
<rect x="740.5" y="196.7" width="4" height="3.7" fill="#ee3b2f" stroke="#000" stroke-width="1"/>
<line x1="750.5" x2="750.5" y1="202" y2="212.7" stroke="#000" stroke-width="1"/>
<rect x="748.5" y="203" width="4" height="4.3" fill="#ee3b2f" stroke="#000" stroke-width="1"/>
<line x1="758.5" x2="758.5" y1="207.4" y2="239.5" stroke="#000" stroke-width="1"/>
<rect x="756.5" y="207.4" width="4" height="32.1" fill="#ee3b2f" stroke="#000" stroke-width="1"/>
<line x1="766.5" x2="766.5" y1="228.3" y2="244.3" stroke="#000" stroke-width="1"/>
<line x1="764" x2="769" y1="240.3" y2="240.3" stroke="#000" stroke-width="1.3"/>
<line x1="775.5" x2="775.5" y1="239" y2="259" stroke="#000" stroke-width="1"/>
<rect x="773.5" y="241.3" width="4" height="7" fill="#ee3b2f" stroke="#000" stroke-width="1"/>
<line x1="783.5" x2="783.5" y1="250.3" y2="261.7" stroke="#000" stroke-width="1"/>
<rect x="781.5" y="250.3" width="4" height="7" fill="#ee3b2f" stroke="#000" stroke-width="1"/>
<line x1="791.5" x2="791.5" y1="246.6" y2="262.6" stroke="#000" stroke-width="1"/>
<line x1="789" x2="794" y1="258" y2="258" stroke="#000" stroke-width="1.3"/>
<line x1="799.5" x2="799.5" y1="243.3" y2="261" stroke="#000" stroke-width="1"/>
<rect x="797.5" y="252.3" width="4" height="5" fill="#17aef0" stroke="#000" stroke-width="1"/>
<line x1="807.5" x2="807.5" y1="247" y2="253" stroke="#000" stroke-width="1"/>
<rect x="805.5" y="248.3" width="4" height="2" fill="#17aef0" stroke="#000" stroke-width="1"/>
<line x1="815.5" x2="815.5" y1="239" y2="257.7" stroke="#000" stroke-width="1"/>
<rect x="813.5" y="241.3" width="4" height="6.1" fill="#17aef0" stroke="#000" stroke-width="1"/>
<line x1="824.5" x2="824.5" y1="226.2" y2="239" stroke="#000" stroke-width="1"/>
<rect x="822.5" y="231.5" width="4" height="7.5" fill="#17aef0" stroke="#000" stroke-width="1"/>
<line x1="832.5" x2="832.5" y1="229" y2="231" stroke="#000" stroke-width="1"/>
<line x1="830" x2="835.3" y1="230" y2="230" stroke="#000" stroke-width="2"/>
<polyline points="14.9,259.2 80.2,259.2 86.0,262.2 92.0,263.0 111.4,263.0 121.0,262.0 147.6,262.2 154.0,259.0 162.0,254.0 170.5,251.9 178.3,249.7 205.0,250.3 227.7,252.0 258.3,251.7 269.0,250.3 277.0,248.3 285.0,248.5 292.0,249.3 308.7,249.3 317.3,251.7 325.3,255.7 333.3,257.0 341.7,262.0 349.9,260.3 358.1,258.3 366.3,250.3 374.4,245.7 382.6,241.7 390.8,237.0 398.9,226.5 407.1,219.5 415.3,216.0 431.6,211.0 439.8,204.3 447.9,194.7 456.1,187.3 464.3,178.7 472.4,170.7 480.6,165.3 496.9,158.4 510.0,158.2 521.4,157.0 537.8,151.3 554.1,149.6 570.4,148.0 578.6,148.7 586.8,154.7 594.9,163.3 603.1,165.6 611.3,164.7 619.4,164.0 630.0,162.0 635.8,161.3 652.1,160.0 676.6,160.0 693.0,162.3 709.3,166.0 725.6,170.0 733.8,173.3 742.0,178.7 750.3,182.3 758.4,177.3 766.7,175.6 774.7,171.3 791.0,165.7 799.0,164.7 807.3,165.0 815.5,167.0 823.6,169.7 832.4,173.3" fill="none" stroke="#1c1cff" stroke-width="1.1" stroke-linejoin="round" />
<polyline points="493.7,293.5 501.7,285.0 510.0,277.5 521.4,267.0 529.6,263.0 537.8,257.7 545.9,251.0 554.1,243.7 562.3,239.7 570.4,235.7 578.6,228.3 586.8,216.5 594.9,202.7 603.1,197.3 611.3,201.3 619.4,202.0 627.6,206.0 635.8,209.3 644.0,211.3 660.3,213.3 676.6,213.3 693.0,214.0 701.1,215.3 709.3,217.3 717.5,218.7 725.6,218.7 733.8,217.3 745.0,215.3 750.3,214.6 758.4,225.5 766.7,234.0 774.7,241.0 782.8,250.3 791.0,257.7 799.0,263.0 807.3,267.0 815.5,269.7 823.6,271.0 832.4,271.3" fill="none" stroke="#1c1cff" stroke-width="1.1" stroke-linejoin="round" />
<polyline points="14.9,259.9 72.2,261.0 81.0,261.7 88.6,265.2 96.8,265.8 103.8,272.8 108.3,274.0 114.6,274.7 136.2,278.5 154.0,281.0 165.0,278.0 178.3,276.3 194.6,275.4 205.0,276.3 235.0,275.5 260.4,275.5 268.9,281.6 276.3,287.4 308.7,287.6 341.3,287.7 358.1,287.4 366.3,282.3 374.4,282.3 390.8,281.7 398.9,275.0 407.1,270.6 431.6,270.3 439.8,260.3 447.9,249.3 464.3,249.3 472.3,241.3 481.7,241.0 488.3,237.7 505.0,232.3 513.3,222.5 554.1,222.3 562.3,217.0 570.4,212.7 578.6,206.5 586.8,206.3 594.9,202.7 603.1,201.3 625.0,200.7 635.8,200.4 644.0,197.3 652.1,184.7 676.6,184.7 684.8,187.3 701.1,187.3 709.3,193.7 725.6,194.7 750.3,194.0 758.4,203.6 766.7,204.0 774.7,211.5 782.8,213.3 791.0,216.0 799.0,220.0 807.3,222.5 832.4,222.5" fill="none" stroke="#1c1cff" stroke-width="1.1" stroke-linejoin="round" />
<polyline points="80.4,295.0 88.6,284.8 96.7,271.4 104.9,271.8 113.1,271.9 121.2,268.8 129.4,283.0 137.6,270.3 145.7,267.4 153.9,247.7 162.1,250.3 170.2,251.0 178.4,245.7 186.6,228.3 194.7,225.3 202.9,235.4 211.1,242.3 219.2,236.3 227.4,204.7 235.6,180.7 243.7,191.0 251.9,184.7 260.1,180.7 268.2,188.3 276.4,194.0 284.6,188.7 292.7,192.3 300.9,190.7 309.1,182.7 317.2,178.0 325.4,172.4 333.6,173.3 341.7,173.3 349.9,174.0 358.1,174.4 366.2,168.7 374.4,176.3 382.6,186.4 390.7,184.7 398.9,204.3 407.1,192.7 415.2,207.3 423.4,207.6 431.6,203.3 439.7,200.4 447.9,199.6 456.1,190.3 464.2,189.7 472.4,191.3 480.6,193.0 488.7,199.3 496.9,209.3 505.1,211.0 513.2,195.3 521.4,196.0 529.6,200.4 537.7,207.3 545.9,239.5 554.1,240.3 562.2,248.3 570.4,257.3 578.6,258.0 586.7,252.3 594.9,248.3 603.1,241.3 611.2,231.5 619.4,230.0" fill="none" stroke="#8a1a8a" stroke-width="1.2" stroke-linejoin="round" />
<polygon points="76.5,293.5 101.9,274.7 113.3,270.9 121.0,264.5 147.6,263.9 154.0,262.6 161.6,266.4 170.5,267.7 178.3,271.4 186.6,271.7 194.6,275.0 203.0,275.7 211.3,279.7 219.3,280.3 235.0,279.5 243.5,276.8 248.8,274.7 252.0,273.4 260.4,272.8 261.5,272.8 268.9,273.1 277.3,274.7 284.7,273.6 292.7,271.5 300.6,273.9 303.8,274.0 308.0,274.2 309.0,274.8 315.4,278.4 326.0,279.5 333.0,281.6 333.3,281.7 341.7,281.3 349.9,277.7 366.0,277.0 366.3,277.0 374.4,273.0 398.9,273.0 407.1,272.7 415.0,276.2 415.3,276.3 423.4,275.4 448.3,275.4 448.8,275.5 448.8,275.5 448.3,275.5 423.4,277.0 415.3,277.5 415.0,277.5 407.1,277.8 398.9,278.2 374.4,278.3 366.3,280.9 366.0,281.0 349.9,281.5 341.7,282.5 333.3,283.5 333.0,283.5 326.0,280.5 315.4,281.0 309.0,284.8 308.0,285.3 303.8,287.4 300.6,290.4 292.7,290.4 284.7,290.5 277.3,290.5 268.9,290.6 261.5,290.6 260.4,290.9 252.0,292.8 248.8,293.5 243.5,293.7 235.0,294.0 219.3,294.6 211.3,294.9 203.0,295.2 194.6,295.5 186.6,295.8 178.3,296.2 170.5,296.5 161.6,296.8 154.0,297.1 147.6,297.3 121.0,298.3 113.3,298.6 101.9,299.0 76.5,300.0" fill="rgba(70,150,210,0.46)"/>
<polygon points="448.8,275.5 449.7,275.5 456.0,276.2 464.3,277.0 472.3,282.3 480.3,288.4 487.0,293.5 488.3,293.5 505.0,293.5 513.0,293.5 518.0,293.5 521.4,290.3 529.6,290.3 537.8,290.3 545.9,290.3 554.1,290.3 562.3,288.0 570.4,286.3 570.4,286.3 562.3,287.7 554.1,287.7 545.9,287.3 537.8,285.0 529.6,284.3 521.4,275.4 518.0,275.2 513.0,275.0 505.0,269.7 488.3,269.7 487.0,268.5 480.3,262.3 472.3,259.7 464.3,261.7 456.0,269.0 449.7,275.4 448.8,275.5" fill="rgba(245,60,60,0.5)"/>
<polygon points="570.4,286.3 578.6,277.7 586.8,272.7 603.1,272.3 611.3,266.3 619.4,261.7 627.6,261.7 644.0,256.3 652.1,242.3 660.3,231.7 676.6,229.4 684.8,221.7 693.0,221.3 709.3,217.3 717.5,214.3 725.6,202.7 733.8,200.4 750.3,201.0 758.4,202.7 766.7,202.7 774.7,200.0 782.8,196.7 791.0,193.0 799.0,192.0 807.3,189.7 815.5,189.0 823.6,194.0 832.4,194.0 832.4,241.3 823.6,241.3 815.5,241.3 807.3,241.3 799.0,241.3 791.0,241.3 782.8,241.3 774.7,241.3 766.7,241.3 758.4,241.3 750.3,241.3 733.8,241.3 725.6,241.3 717.5,241.3 709.3,241.3 693.0,241.3 684.8,241.3 676.6,249.3 660.3,249.7 652.1,259.7 644.0,270.3 627.6,270.3 619.4,270.3 611.3,275.7 603.1,281.3 586.8,281.7 578.6,282.6 570.4,286.3" fill="rgba(70,150,210,0.46)"/>
<polyline points="76.5,300.0 248.8,293.5 261.5,290.6 300.6,290.4 303.8,287.4 309.0,284.8 315.4,281.0 326.0,280.5 333.0,283.5 349.9,281.5 366.0,281.0 374.4,278.3 398.9,278.2 415.0,277.5 449.7,275.4 456.0,269.0 464.3,261.7 472.3,259.7 480.3,262.3 488.3,269.7 505.0,269.7 513.0,275.0 521.4,275.4 529.6,284.3 537.8,285.0 545.9,287.3 554.1,287.7 562.3,287.7 570.4,286.3 578.6,282.6 586.8,281.7 603.1,281.3 611.3,275.7 619.4,270.3 644.0,270.3 652.1,259.7 660.3,249.7 676.6,249.3 684.8,241.3 832.4,241.3" fill="none" stroke="#7a7a7a" stroke-width="1.1" stroke-linejoin="round" />
<polyline points="76.5,293.5 101.9,274.7 113.3,270.9 121.0,264.5 147.6,263.9 154.0,262.6 161.6,266.4 170.5,267.7 178.3,271.4 186.6,271.7 194.6,275.0 203.0,275.7 211.3,279.7 219.3,280.3 235.0,279.5 243.5,276.8 252.0,273.4 260.4,272.8 268.9,273.1 277.3,274.7 284.7,273.6 292.7,271.5 300.6,273.9 308.0,274.2 315.4,278.4 326.0,279.5 333.3,281.7 341.7,281.3 349.9,277.7 366.3,277.0 374.4,273.0 398.9,273.0 407.1,272.7 415.3,276.3 423.4,275.4 448.3,275.4 464.3,277.0 472.3,282.3 487.0,293.5 518.0,293.5 521.4,290.3 554.1,290.3 562.3,288.0 570.4,286.3 578.6,277.7 586.8,272.7 603.1,272.3 611.3,266.3 619.4,261.7 627.6,261.7 644.0,256.3 652.1,242.3 660.3,231.7 676.6,229.4 684.8,221.7 693.0,221.3 709.3,217.3 717.5,214.3 725.6,202.7 733.8,200.4 750.3,201.0 758.4,202.7 766.7,202.7 774.7,200.0 782.8,196.7 791.0,193.0 799.0,192.0 807.3,189.7 815.5,189.0 823.6,194.0 832.4,194.0 832.4,241.3" fill="none" stroke="#111" stroke-width="1.25" stroke-linejoin="round" />
</g>
<rect x="14.8" y="280.8" width="124.5" height="10.6" fill="rgba(255,255,255,0.72)"/>
<line x1="14.8" x2="139" y1="281.3" y2="281.3" stroke="rgba(200,200,200,0.6)" stroke-width="1"/>
<rect x="14.8" y="281" width="2.2" height="1" fill="#333"/>
<rect x="14.8" y="288.8" width="2.2" height="1.2" fill="#ff2a2a"/>
<text x="22.4" y="286.7" font-family="DejaVu Sans, sans-serif" font-size="9.3" letter-spacing="0.85" fill="#000" stroke="#000" stroke-width="0.2">Daten sind indikativ</text>
<line x1="14.5" x2="873.5" y1="367.5" y2="367.5" stroke="#9fb6cc" stroke-width="1"/>
<rect x="70" y="367" width="5" height="7.2" fill="#dd0000"/>
<rect x="78" y="367" width="5" height="3" fill="#dd0000"/>
<rect x="95" y="366.6" width="5" height="1.4" fill="#6cc400"/>
<rect x="103" y="365.5" width="5" height="2.5" fill="#6cc400"/>
<rect x="111" y="366" width="5" height="2" fill="#6cc400"/>
<rect x="119" y="364.2" width="5" height="3.8" fill="#6cc400"/>
<rect x="127" y="365" width="5" height="3" fill="#6cc400"/>
<rect x="136" y="367" width="5" height="1" fill="#6cc400"/>
<rect x="144" y="366.7" width="5" height="1.3" fill="#6cc400"/>
<rect x="152" y="365" width="5" height="3" fill="#6cc400"/>
<rect x="160" y="362.3" width="5" height="5.7" fill="#6cc400"/>
<rect x="168" y="362.3" width="5" height="5.7" fill="#6cc400"/>
<rect x="176" y="362.5" width="5" height="5.5" fill="#6cc400"/>
<rect x="185" y="366.2" width="5" height="1.8" fill="#6cc400"/>
<rect x="193" y="367" width="5" height="3.7" fill="#dd0000"/>
<rect x="201" y="367" width="5" height="6.7" fill="#dd0000"/>
<rect x="209" y="367" width="5" height="6.7" fill="#dd0000"/>
<rect x="217" y="367" width="5" height="8.8" fill="#dd0000"/>
<rect x="225" y="367" width="5" height="8.3" fill="#dd0000"/>
<rect x="234" y="367" width="5" height="8.8" fill="#dd0000"/>
<rect x="242" y="367" width="5" height="8.3" fill="#dd0000"/>
<rect x="250" y="367" width="5" height="7.2" fill="#dd0000"/>
<rect x="258" y="367" width="5" height="6" fill="#dd0000"/>
<rect x="266" y="367" width="5" height="8.3" fill="#dd0000"/>
<rect x="274" y="367" width="5" height="10.7" fill="#dd0000"/>
<rect x="283" y="367" width="5" height="11.1" fill="#dd0000"/>
<rect x="291" y="367" width="5" height="9" fill="#dd0000"/>
<rect x="299" y="367" width="5" height="4.1" fill="#dd0000"/>
<rect x="307" y="366.5" width="5" height="1.5" fill="#6cc400"/>
<rect x="315" y="362.5" width="5" height="5.5" fill="#6cc400"/>
<rect x="323" y="360.9" width="5" height="7.1" fill="#6cc400"/>
<rect x="332" y="359" width="5" height="9" fill="#6cc400"/>
<rect x="340" y="361.1" width="5" height="6.9" fill="#6cc400"/>
<rect x="348" y="360.4" width="5" height="7.6" fill="#6cc400"/>
<rect x="356" y="359.7" width="5" height="8.3" fill="#6cc400"/>
<rect x="364" y="356" width="5" height="12" fill="#6cc400"/>
<rect x="372" y="355.5" width="5" height="12.5" fill="#6cc400"/>
<rect x="381" y="356" width="5" height="12" fill="#6cc400"/>
<rect x="389" y="355.5" width="5" height="12.5" fill="#6cc400"/>
<rect x="397" y="353.2" width="5" height="14.8" fill="#6cc400"/>
<rect x="405" y="352.3" width="5" height="15.7" fill="#6cc400"/>
<rect x="413" y="354.6" width="5" height="13.4" fill="#6cc400"/>
<rect x="421" y="358.1" width="5" height="9.9" fill="#6cc400"/>
<rect x="430" y="359.7" width="5" height="8.3" fill="#6cc400"/>
<rect x="438" y="356.2" width="5" height="11.8" fill="#6cc400"/>
<rect x="446" y="350.4" width="5" height="17.6" fill="#6cc400"/>
<rect x="454" y="350.2" width="5" height="17.8" fill="#6cc400"/>
<rect x="462" y="350" width="5" height="18" fill="#6cc400"/>
<rect x="470" y="350.4" width="5" height="17.6" fill="#6cc400"/>
<rect x="479" y="353.7" width="5" height="14.3" fill="#6cc400"/>
<rect x="487" y="357.9" width="5" height="10.1" fill="#6cc400"/>
<rect x="495" y="360.4" width="5" height="7.6" fill="#6cc400"/>
<rect x="503" y="363.2" width="5" height="4.8" fill="#6cc400"/>
<rect x="511" y="366" width="5" height="2" fill="#6cc400"/>
<rect x="519" y="366.5" width="5" height="1.5" fill="#6cc400"/>
<rect x="528" y="366.7" width="5" height="1.3" fill="#6cc400"/>
<rect x="536" y="366.2" width="5" height="1.8" fill="#6cc400"/>
<rect x="544" y="367" width="5" height="1" fill="#6cc400"/>
<rect x="552" y="367" width="5" height="1.4" fill="#dd0000"/>
<rect x="560" y="367" width="5" height="3" fill="#dd0000"/>
<rect x="568" y="367" width="5" height="3.9" fill="#dd0000"/>
<rect x="577" y="367" width="5" height="4.1" fill="#dd0000"/>
<rect x="585" y="367" width="5" height="6" fill="#dd0000"/>
<rect x="593" y="367" width="5" height="9" fill="#dd0000"/>
<rect x="601" y="367" width="5" height="10.9" fill="#dd0000"/>
<rect x="609" y="367" width="5" height="15.3" fill="#dd0000"/>
<rect x="617" y="367" width="5" height="15.8" fill="#dd0000"/>
<rect x="626" y="367" width="5" height="17.9" fill="#dd0000"/>
<rect x="634" y="367" width="5" height="18.8" fill="#dd0000"/>
<rect x="642" y="367" width="5" height="17.9" fill="#dd0000"/>
<rect x="650" y="367" width="5" height="16.5" fill="#dd0000"/>
<rect x="658" y="367" width="5" height="14.6" fill="#dd0000"/>
<rect x="666" y="367" width="5" height="11.1" fill="#dd0000"/>
<rect x="675" y="367" width="5" height="9" fill="#dd0000"/>
<rect x="683" y="367" width="5" height="7.9" fill="#dd0000"/>
<rect x="691" y="367" width="5" height="6.7" fill="#dd0000"/>
<rect x="699" y="367" width="5" height="7.2" fill="#dd0000"/>
<rect x="707" y="367" width="5" height="9" fill="#dd0000"/>
<rect x="715" y="367" width="5" height="10" fill="#dd0000"/>
<rect x="724" y="367" width="5" height="7.2" fill="#dd0000"/>
<rect x="732" y="367" width="5" height="5.5" fill="#dd0000"/>
<rect x="740" y="367" width="5" height="5.3" fill="#dd0000"/>
<rect x="748" y="367" width="5" height="6" fill="#dd0000"/>
<rect x="756" y="367" width="5" height="11.4" fill="#dd0000"/>
<rect x="764" y="367" width="5" height="14.6" fill="#dd0000"/>
<rect x="773" y="367" width="5" height="17.2" fill="#dd0000"/>
<rect x="781" y="367" width="5" height="19.5" fill="#dd0000"/>
<rect x="789" y="367" width="5" height="19.5" fill="#dd0000"/>
<rect x="797" y="367" width="5" height="17.6" fill="#dd0000"/>
<rect x="805" y="367" width="5" height="14.8" fill="#dd0000"/>
<rect x="813" y="367" width="5" height="10.7" fill="#dd0000"/>
<rect x="822" y="367" width="5" height="5.5" fill="#dd0000"/>
<rect x="830" y="367" width="5" height="1.8" fill="#dd0000"/>
<polyline points="14.7,362.5 72.4,363.7 84.5,364.8 98.5,363.2 111.5,362.5 131.0,360.9 149.7,359.7 170.7,356.7 180.0,355.0 189.3,355.5 207.9,359.0 225.0,362.7 242.5,367.6 260.0,371.8 276.5,376.0 292.8,379.3 301.0,380.4 309.1,380.0 317.3,378.4 333.6,374.2 349.9,370.7 358.1,369.0 366.3,366.0 382.6,359.7 398.9,352.0 415.3,345.0 431.6,340.4 439.8,337.8 456.1,328.8 472.4,320.1 488.8,314.6 505.1,311.5 521.4,310.4 537.8,309.9 554.1,310.4 570.4,311.3 586.8,313.6 603.1,318.3 619.4,324.8 635.8,333.4 652.1,342.0 660.0,345.8 668.5,348.1 684.8,351.6 701.1,355.1 717.5,359.7 733.8,362.5 750.1,364.4 758.3,367.2 774.6,375.3 791.0,384.6 807.3,391.6 823.6,395.8 831.8,396.5" fill="none" stroke="#e01010" stroke-width="1.1" stroke-linejoin="round" />
<polyline points="14.7,371.4 68.2,369.5 72.4,369.0 79.8,366.0 89.2,363.7 100.8,361.4 111.5,360.7 119.4,358.3 131.0,358.3 136.9,359.7 145.0,359.0 153.2,357.4 161.3,352.5 170.7,351.6 178.8,350.2 187.0,354.4 195.1,359.0 203.3,363.2 212.6,365.5 219.5,368.3 225.0,370.7 242.5,374.9 260.0,375.8 268.3,380.0 276.5,384.6 284.6,387.9 292.8,387.9 301.0,384.0 309.1,377.7 317.3,373.0 325.5,369.0 333.6,365.3 341.8,365.3 349.9,363.0 358.1,360.7 366.3,354.4 374.4,350.4 382.6,347.4 390.8,344.4 398.9,338.5 407.1,333.0 415.3,332.3 423.4,333.4 431.6,333.4 439.8,325.8 448.1,316.4 456.1,311.3 464.3,306.6 472.4,303.1 480.6,303.1 488.8,304.3 496.9,305.5 505.1,307.3 513.3,309.0 521.4,309.7 537.8,309.2 545.9,309.7 554.1,310.8 562.3,312.5 570.4,314.3 578.6,315.5 586.8,318.3 594.9,322.9 603.1,328.1 611.3,335.7 619.4,339.2 627.6,345.8 635.8,350.9 644.0,354.4 652.1,357.2 660.3,359.2 668.5,358.3 684.8,358.6 693.0,359.7 701.1,361.4 709.3,364.8 717.5,368.3 725.6,367.4 733.8,367.2 742.0,367.9 750.1,370.0 758.3,377.7 766.5,383.5 774.6,390.5 782.8,397.4 791.0,402.6 799.1,406.1 807.3,406.8 815.5,404.9 823.6,400.9 831.8,397.0" fill="none" stroke="#3a3ae6" stroke-width="1.1" stroke-linejoin="round" />
<defs><clipPath id="mu"><rect x="14" y="415" width="860" height="61.5"/></clipPath><clipPath id="md"><rect x="14" y="476.5" width="860" height="60"/></clipPath></defs>
<g clip-path="url(#mu)"><polygon points="14.7,476.5 14.7,488.0 67.0,476.6 72.2,475.4 80.4,475.0 88.6,474.7 96.7,460.5 104.9,463.6 113.1,467.5 121.2,459.8 129.4,470.5 137.6,469.8 145.7,460.5 153.9,454.9 162.1,446.8 170.2,464.7 178.4,466.6 186.6,478.5 194.7,486.8 202.9,488.5 211.1,481.0 219.2,493.8 227.4,484.5 235.6,482.9 243.7,490.3 251.9,493.4 260.1,501.5 268.2,506.2 276.4,513.8 284.6,499.6 292.7,485.7 300.9,472.4 309.1,469.4 317.2,463.8 325.4,467.5 333.6,460.3 341.7,471.7 349.9,464.7 358.1,461.9 366.2,437.2 374.4,435.1 382.6,436.8 390.7,438.4 398.9,440.3 407.1,446.6 415.2,453.1 423.4,457.3 431.6,456.1 439.7,425.1 447.9,418.1 456.1,427.5 464.2,435.1 472.4,430.5 480.6,436.1 488.7,443.3 496.9,450.0 505.1,454.9 513.2,446.1 521.4,436.8 529.6,437.9 537.7,454.9 545.9,471.9 554.1,464.5 562.2,471.0 570.4,472.2 578.6,462.9 586.7,464.7 594.9,475.9 603.1,471.5 611.2,486.4 619.4,483.3 627.6,496.8 635.7,499.6 643.9,496.1 652.1,494.3 660.2,491.7 668.4,486.8 676.6,491.5 684.7,486.8 692.9,481.0 701.1,486.4 709.2,479.8 717.4,489.6 725.6,467.5 733.7,469.8 741.9,475.9 750.1,481.0 758.2,503.8 766.4,509.7 774.6,514.3 782.7,519.4 790.9,518.7 799.1,510.6 807.2,501.5 815.4,495.4 823.6,500.3 831.7,498.5 831.7,476.5" fill="rgba(70,150,210,0.46)"/><polyline points="14.7,488.0 67.0,476.6 72.2,475.4 80.4,475.0 88.6,474.7 96.7,460.5 104.9,463.6 113.1,467.5 121.2,459.8 129.4,470.5 137.6,469.8 145.7,460.5 153.9,454.9 162.1,446.8 170.2,464.7 178.4,466.6 186.6,478.5 194.7,486.8 202.9,488.5 211.1,481.0 219.2,493.8 227.4,484.5 235.6,482.9 243.7,490.3 251.9,493.4 260.1,501.5 268.2,506.2 276.4,513.8 284.6,499.6 292.7,485.7 300.9,472.4 309.1,469.4 317.2,463.8 325.4,467.5 333.6,460.3 341.7,471.7 349.9,464.7 358.1,461.9 366.2,437.2 374.4,435.1 382.6,436.8 390.7,438.4 398.9,440.3 407.1,446.6 415.2,453.1 423.4,457.3 431.6,456.1 439.7,425.1 447.9,418.1 456.1,427.5 464.2,435.1 472.4,430.5 480.6,436.1 488.7,443.3 496.9,450.0 505.1,454.9 513.2,446.1 521.4,436.8 529.6,437.9 537.7,454.9 545.9,471.9 554.1,464.5 562.2,471.0 570.4,472.2 578.6,462.9 586.7,464.7 594.9,475.9 603.1,471.5 611.2,486.4 619.4,483.3 627.6,496.8 635.7,499.6 643.9,496.1 652.1,494.3 660.2,491.7 668.4,486.8 676.6,491.5 684.7,486.8 692.9,481.0 701.1,486.4 709.2,479.8 717.4,489.6 725.6,467.5 733.7,469.8 741.9,475.9 750.1,481.0 758.2,503.8 766.4,509.7 774.6,514.3 782.7,519.4 790.9,518.7 799.1,510.6 807.2,501.5 815.4,495.4 823.6,500.3 831.7,498.5" fill="none" stroke="#4d9ad2" stroke-width="1.2"/></g>
<g clip-path="url(#md)"><polygon points="14.7,476.5 14.7,488.0 67.0,476.6 72.2,475.4 80.4,475.0 88.6,474.7 96.7,460.5 104.9,463.6 113.1,467.5 121.2,459.8 129.4,470.5 137.6,469.8 145.7,460.5 153.9,454.9 162.1,446.8 170.2,464.7 178.4,466.6 186.6,478.5 194.7,486.8 202.9,488.5 211.1,481.0 219.2,493.8 227.4,484.5 235.6,482.9 243.7,490.3 251.9,493.4 260.1,501.5 268.2,506.2 276.4,513.8 284.6,499.6 292.7,485.7 300.9,472.4 309.1,469.4 317.2,463.8 325.4,467.5 333.6,460.3 341.7,471.7 349.9,464.7 358.1,461.9 366.2,437.2 374.4,435.1 382.6,436.8 390.7,438.4 398.9,440.3 407.1,446.6 415.2,453.1 423.4,457.3 431.6,456.1 439.7,425.1 447.9,418.1 456.1,427.5 464.2,435.1 472.4,430.5 480.6,436.1 488.7,443.3 496.9,450.0 505.1,454.9 513.2,446.1 521.4,436.8 529.6,437.9 537.7,454.9 545.9,471.9 554.1,464.5 562.2,471.0 570.4,472.2 578.6,462.9 586.7,464.7 594.9,475.9 603.1,471.5 611.2,486.4 619.4,483.3 627.6,496.8 635.7,499.6 643.9,496.1 652.1,494.3 660.2,491.7 668.4,486.8 676.6,491.5 684.7,486.8 692.9,481.0 701.1,486.4 709.2,479.8 717.4,489.6 725.6,467.5 733.7,469.8 741.9,475.9 750.1,481.0 758.2,503.8 766.4,509.7 774.6,514.3 782.7,519.4 790.9,518.7 799.1,510.6 807.2,501.5 815.4,495.4 823.6,500.3 831.7,498.5 831.7,476.5" fill="rgba(211,91,91,0.45)"/><polyline points="14.7,488.0 67.0,476.6 72.2,475.4 80.4,475.0 88.6,474.7 96.7,460.5 104.9,463.6 113.1,467.5 121.2,459.8 129.4,470.5 137.6,469.8 145.7,460.5 153.9,454.9 162.1,446.8 170.2,464.7 178.4,466.6 186.6,478.5 194.7,486.8 202.9,488.5 211.1,481.0 219.2,493.8 227.4,484.5 235.6,482.9 243.7,490.3 251.9,493.4 260.1,501.5 268.2,506.2 276.4,513.8 284.6,499.6 292.7,485.7 300.9,472.4 309.1,469.4 317.2,463.8 325.4,467.5 333.6,460.3 341.7,471.7 349.9,464.7 358.1,461.9 366.2,437.2 374.4,435.1 382.6,436.8 390.7,438.4 398.9,440.3 407.1,446.6 415.2,453.1 423.4,457.3 431.6,456.1 439.7,425.1 447.9,418.1 456.1,427.5 464.2,435.1 472.4,430.5 480.6,436.1 488.7,443.3 496.9,450.0 505.1,454.9 513.2,446.1 521.4,436.8 529.6,437.9 537.7,454.9 545.9,471.9 554.1,464.5 562.2,471.0 570.4,472.2 578.6,462.9 586.7,464.7 594.9,475.9 603.1,471.5 611.2,486.4 619.4,483.3 627.6,496.8 635.7,499.6 643.9,496.1 652.1,494.3 660.2,491.7 668.4,486.8 676.6,491.5 684.7,486.8 692.9,481.0 701.1,486.4 709.2,479.8 717.4,489.6 725.6,467.5 733.7,469.8 741.9,475.9 750.1,481.0 758.2,503.8 766.4,509.7 774.6,514.3 782.7,519.4 790.9,518.7 799.1,510.6 807.2,501.5 815.4,495.4 823.6,500.3 831.7,498.5" fill="none" stroke="#d46060" stroke-width="1.2"/></g>
<line x1="14.5" x2="873.5" y1="476.5" y2="476.5" stroke="#8fb0cc" stroke-width="0.9" opacity="0.8"/>
<line x1="14.5" x2="873.5" y1="555.5" y2="555.5" stroke="#1b7096" stroke-width="1.1"/>
<line x1="14.5" x2="873.5" y1="588.2" y2="588.2" stroke="#f80808" stroke-width="1.25"/>
<polyline points="14.7,573.9 72.2,568.5 80.4,566.0 88.6,566.9 96.7,566.7 104.9,566.4 113.1,568.1 121.2,563.9 129.4,568.3 137.6,572.5 145.7,567.6 153.9,564.6 162.1,560.6 170.2,566.2 178.4,564.3 186.6,572.7 194.7,576.5 202.9,576.9 211.1,573.7 219.2,576.7 227.4,574.4 235.6,576.7 243.7,576.2 251.9,574.6 260.1,574.6 268.2,581.3 276.4,583.4 284.6,582.3 292.7,578.6 300.9,570.4 309.1,566.0 317.2,566.2 325.4,566.4 333.6,564.6 341.7,571.8 349.9,566.9 358.1,565.7 366.2,560.2 374.4,562.0 382.6,562.3 390.7,560.4 398.9,556.2 407.1,555.3 415.2,561.1 423.4,564.1 431.6,562.3 439.7,555.3 447.9,550.8 456.1,555.7 464.2,554.6 472.4,554.1 480.6,557.6 488.7,559.7 496.9,558.3 505.1,560.4 513.2,559.5 521.4,557.8 529.6,556.4 537.7,555.3 545.9,556.0 554.1,556.2 562.2,557.4 570.4,557.4 578.6,555.5 586.7,560.6 594.9,566.4 603.1,565.5 611.2,574.6 619.4,569.5 627.6,575.3 635.7,574.8 643.9,573.4 652.1,572.3 660.2,571.3 668.4,567.6 676.6,568.1 684.7,568.8 692.9,569.9 701.1,572.7 709.2,577.9 717.4,578.3 725.6,569.5 733.7,570.4 741.9,573.2 750.1,575.5 758.2,586.0 766.4,586.2 774.6,588.3 782.7,590.4 790.9,590.2 799.1,586.7 807.2,584.6 815.4,579.7 823.6,575.1 831.7,574.8" fill="none" stroke="#1a1a1a" stroke-width="1.2" stroke-linejoin="round" />
<rect x="471" y="297" width="16" height="1" fill="#8c8c8c" shape-rendering="crispEdges"/>
<rect x="471" y="299" width="16" height="1" fill="#8c8c8c" shape-rendering="crispEdges"/>
<rect x="471" y="301" width="16" height="1" fill="#8c8c8c" shape-rendering="crispEdges"/>
<rect x="471" y="411" width="16" height="1" fill="#8c8c8c" shape-rendering="crispEdges"/>
<rect x="471" y="413" width="16" height="1" fill="#8c8c8c" shape-rendering="crispEdges"/>
<rect x="471" y="415" width="16" height="1" fill="#8c8c8c" shape-rendering="crispEdges"/>
<rect x="471" y="525" width="16" height="1" fill="#8c8c8c" shape-rendering="crispEdges"/>
<rect x="471" y="527" width="16" height="1" fill="#8c8c8c" shape-rendering="crispEdges"/>
<rect x="471" y="529" width="16" height="1" fill="#8c8c8c" shape-rendering="crispEdges"/>
<text x="21.3" y="114.3" font-size="12" fill="#3d3d3d" >MA</text>
<text x="44" y="114.3" font-size="12" fill="#66cc00" >20</text>
<text x="68.4" y="114.3" font-size="12" fill="#3d3d3d" >MA</text>
<text x="90.8" y="114.3" font-size="12" fill="#aaa" >50</text>
<text x="115.1" y="114.3" font-size="12" fill="#3d3d3d" >MA</text>
<text x="138.8" y="114.3" font-size="12" fill="#cc0000" >100</text>
<text x="184.6" y="114.3" font-size="12" fill="#444" textLength="80.5">Bollinger Band</text>
<text x="271.9" y="114.3" font-size="12" fill="#0000dd" >20</text>
<text x="292.9" y="114.3" font-size="12" fill="#0000dd" >2.00</text>
<text x="342.3" y="114.3" font-size="12" fill="#3d3d3d" >Short Periode</text>
<text x="424.3" y="114.3" font-size="12" fill="#3d3d3d" >9</text>
<text x="448.3" y="114.3" font-size="12" fill="#3d3d3d" >Long Periode</text>
<text x="529.3" y="114.3" font-size="12" fill="#3d3d3d" >26</text>
<text x="553.3" y="114.3" font-size="12" fill="#3d3d3d" >Signal Periode</text>
<text x="641.3" y="114.3" font-size="12" fill="#3d3d3d" >52</text>
<text x="17.5" y="316.7" font-size="12" fill="#3d3d3d" >MACD</text>
<text x="58.8" y="316.7" font-size="12" fill="#cc0000" >12</text>
<text x="79.2" y="316.7" font-size="12" fill="#cc0000" >26</text>
<text x="100.3" y="316.7" font-size="12" fill="#cc0000" >9</text>
<text x="17.5" y="430.5" font-size="12" fill="#3d3d3d" >Momentum</text>
<text x="86.8" y="430.5" font-size="12" fill="#333" >12</text>
<text x="17.5" y="544.8" font-size="12" fill="#3d3d3d" >RSI</text>
<text x="45" y="544.8" font-size="12" fill="#000" >14</text>
<text x="879.8" y="104.6" font-size="10.4" fill="#000" >1710.00</text>
<text x="879.8" y="142" font-size="10.4" fill="#000" >1708.00</text>
<text x="879.8" y="179.5" font-size="10.4" fill="#000" >1706.00</text>
<text x="879.8" y="216.7" font-size="10.4" fill="#000" >1704.00</text>
<text x="879.8" y="254.5" font-size="10.4" fill="#000" >1702.00</text>
<text x="879.8" y="292" font-size="10.4" fill="#000" >1700.00</text>
<text x="879.2" y="319.8" font-size="10.4" fill="#000" >1</text>
<text x="879.2" y="339.6" font-size="10.4" fill="#000" >0.6</text>
<text x="879.2" y="359.8" font-size="10.4" fill="#000" >0.2</text>
<text x="879.2" y="379.8" font-size="10.4" fill="#000" >-0.2</text>
<text x="879.2" y="400.2" font-size="10.4" fill="#000" >-0.6</text>
<text x="879.2" y="442.7" font-size="10.4" fill="#000" >3</text>
<text x="879.2" y="466.7" font-size="10.4" fill="#000" >1</text>
<text x="879.2" y="490.9" font-size="10.4" fill="#000" >-1</text>
<text x="879.2" y="515.5" font-size="10.4" fill="#000" >-3</text>
<text x="879.2" y="549.5" font-size="10.4" fill="#000" >80</text>
<text x="879.2" y="581.7" font-size="10.4" fill="#000" >40</text>
<text x="879.2" y="613.9" font-size="10.4" fill="#000" >0</text>
<rect x="873.7" y="220.8" width="67.8" height="17.6" fill="#dedede" stroke="#000" stroke-width="1"/>
<text x="878.8" y="232.8" font-size="10.4" fill="#000" >1703.21</text>
<text x="69.5" y="624" font-size="10.4" fill="#a6a6a6" text-anchor="middle">0:00</text>
<text x="108.5" y="624" font-size="10.4" fill="#000" text-anchor="middle">0:24</text>
<text x="167.5" y="624" font-size="10.4" fill="#a6a6a6" text-anchor="middle">1:00</text>
<text x="265.5" y="624" font-size="10.4" fill="#a6a6a6" text-anchor="middle">2:00</text>
<text x="324.5" y="624" font-size="10.4" fill="#000" text-anchor="middle">2:36</text>
<text x="363.5" y="624" font-size="10.4" fill="#a6a6a6" text-anchor="middle">3:00</text>
<text x="461.5" y="624" font-size="10.4" fill="#a6a6a6" text-anchor="middle">4:00</text>
<text x="559.5" y="624" font-size="10.4" fill="#a6a6a6" text-anchor="middle">5:00</text>
<text x="611.5" y="624" font-size="10.4" fill="#000" text-anchor="middle">5:32</text>
<text x="657.5" y="624" font-size="10.4" fill="#a6a6a6" text-anchor="middle">6:00</text>
<text x="755.5" y="624" font-size="10.4" fill="#a6a6a6" text-anchor="middle">7:00</text>
<text x="853.5" y="624" font-size="10.4" fill="#a6a6a6" text-anchor="middle">8:00</text>
<rect x="15" y="638" width="857.5" height="40" fill="#fff"/>
<polygon points="15.6,658.4 17.8,658.4 20.0,659.4 22.2,658.9 24.4,659.8 26.6,661.0 28.8,662.6 31.0,663.2 33.2,662.4 35.4,662.8 37.6,662.0 39.8,661.9 42.0,662.2 44.2,662.7 46.4,661.6 48.6,661.7 50.8,662.2 53.0,662.5 55.2,661.8 57.4,661.4 59.6,662.1 61.8,660.6 64.0,662.9 66.2,663.4 68.4,662.3 70.6,660.0 72.8,657.9 75.0,656.3 77.2,654.3 79.4,654.8 81.6,654.7 83.8,654.3 86.0,654.4 88.2,653.6 90.4,653.5 92.6,653.6 94.8,654.4 97.0,654.4 99.2,654.5 101.4,655.2 103.6,655.3 105.8,655.4 108.0,657.1 110.2,658.3 112.4,658.9 114.6,659.8 116.8,659.8 119.0,660.3 121.2,660.2 123.4,659.2 125.6,659.6 127.8,657.8 130.0,657.8 132.2,658.5 134.4,657.8 136.6,658.5 138.8,657.2 141.0,655.2 143.2,655.0 145.4,657.1 147.6,659.7 149.8,659.3 152.0,660.1 154.2,659.9 156.4,659.7 158.6,659.4 160.8,659.8 163.0,659.8 165.2,660.7 167.4,662.2 169.6,661.7 171.8,663.0 174.0,664.6 176.2,665.5 178.4,663.9 180.6,662.1 182.8,662.2 185.0,662.5 187.2,661.5 189.4,661.9 191.6,661.1 193.8,660.6 196.0,660.1 198.2,660.8 200.4,659.8 202.6,659.9 204.8,660.0 207.0,660.6 209.2,659.4 211.4,660.4 213.6,661.8 215.8,662.2 218.0,662.1 220.2,662.2 222.4,661.7 224.6,662.2 226.8,662.5 229.0,663.6 231.2,664.1 233.4,663.2 235.6,663.4 237.8,663.7 240.0,663.4 242.2,663.2 244.4,662.7 246.6,662.4 248.8,662.6 251.0,663.7 253.2,663.9 255.4,663.7 257.6,663.8 259.8,663.0 262.0,662.3 264.2,661.9 266.4,661.7 268.6,660.6 270.8,661.6 273.0,661.1 275.2,661.0 277.4,660.7 279.6,659.8 281.8,659.6 284.0,659.1 286.2,660.1 288.4,659.5 290.6,659.8 292.8,660.2 295.0,660.3 297.2,660.9 299.4,660.9 301.6,661.2 303.8,661.8 306.0,662.1 308.2,662.8 310.4,662.7 312.6,664.4 314.8,665.0 317.0,664.2 319.2,662.4 321.4,660.7 323.6,660.5 325.8,659.9 328.0,660.7 330.2,660.7 332.4,659.7 334.6,659.6 336.8,659.0 339.0,659.0 341.2,659.4 343.4,659.3 345.6,660.1 347.8,659.1 350.0,658.9 352.2,661.4 354.4,662.2 356.6,662.2 358.8,662.4 361.0,661.4 363.2,661.7 365.4,661.2 367.6,659.9 369.8,659.5 372.0,659.0 374.2,659.3 376.4,659.2 378.6,660.2 380.8,659.9 383.0,660.1 385.2,659.3 387.4,659.0 389.6,659.7 391.8,659.8 394.0,659.5 396.2,659.4 398.4,659.3 400.6,659.2 402.8,658.4 405.0,658.7 407.2,658.4 409.4,657.3 411.6,656.7 413.8,656.3 416.0,656.8 418.2,658.0 420.4,657.4 422.6,654.9 424.8,653.8 427.0,653.2 429.2,652.7 431.4,651.5 433.6,650.9 435.8,650.6 438.0,650.8 440.2,651.0 442.4,651.7 444.6,652.3 446.8,652.4 449.0,652.0 451.2,652.3 453.4,652.5 455.6,651.6 457.8,652.4 460.0,652.8 462.2,652.5 464.4,648.5 466.6,645.2 468.8,645.0 471.0,646.0 473.2,645.6 475.4,646.4 477.6,646.9 479.8,646.2 482.0,646.1 484.2,646.7 486.4,646.3 488.6,645.3 490.8,645.0 493.0,644.3 495.2,644.6 497.4,643.7 499.6,643.1 501.8,644.7 504.0,645.5 506.2,645.4 508.4,645.0 510.6,645.3 512.8,644.7 515.0,644.5 517.2,645.9 519.4,645.6 521.6,645.4 523.8,646.1 526.0,645.5 528.2,646.1 530.4,646.1 532.6,645.5 534.8,645.8 537.0,646.1 539.2,646.3 541.4,647.0 543.6,646.2 545.8,646.0 548.0,645.3 550.2,646.8 552.4,646.6 554.6,647.4 556.8,648.3 559.0,649.4 561.2,649.4 563.4,648.9 565.6,647.0 567.8,646.0 570.0,646.9 572.2,647.1 574.4,648.4 576.6,647.9 578.8,647.4 581.0,648.4 583.2,647.3 585.4,647.4 587.6,647.3 589.8,646.7 592.0,645.9 594.2,645.7 596.4,645.4 598.6,645.0 600.8,643.3 603.0,643.2 605.2,642.2 607.4,642.3 609.6,643.0 611.8,642.6 614.0,642.7 616.2,643.0 618.4,643.1 620.6,642.3 622.8,642.5 625.0,642.2 627.2,642.1 629.4,642.8 631.6,642.9 633.8,643.5 636.0,643.8 638.2,656.7 640.4,662.4 642.6,666.6 644.8,670.7 647.0,667.9 649.2,665.7 651.4,663.5 653.6,662.9 655.8,661.4 658.0,662.2 660.2,664.1 662.4,663.0 664.6,662.5 666.8,664.4 669.0,667.3 671.2,666.5 673.4,665.3 675.6,662.9 677.8,663.5 680.0,663.3 682.2,662.4 684.4,663.2 686.6,663.2 688.8,662.1 691.0,663.5 693.2,663.1 695.4,663.6 697.6,664.7 699.8,664.9 702.0,664.4 704.2,665.1 706.4,665.6 708.6,665.8 710.8,665.9 713.0,666.4 715.2,667.3 717.4,666.1 719.6,666.6 721.8,666.2 724.0,665.3 726.2,665.5 728.4,665.7 730.6,665.4 732.8,665.5 735.0,667.5 737.2,668.0 739.4,669.0 741.6,668.5 743.8,669.2 746.0,668.5 748.2,669.3 750.4,668.2 752.6,667.7 754.8,667.8 757.0,668.6 759.2,668.8 761.4,668.5 763.6,668.7 765.8,670.2 768.0,670.0 770.2,670.6 772.4,670.1 774.6,670.4 776.8,671.6 779.0,671.6 781.2,671.5 783.4,672.7 785.6,672.3 787.8,672.5 790.0,671.5 792.2,672.6 794.4,671.5 796.6,672.6 798.8,672.0 801.0,671.9 803.2,672.2 805.4,672.7 807.6,671.8 809.8,671.6 812.0,672.1 814.2,671.7 816.4,671.4 818.6,671.2 820.8,670.8 823.0,670.7 825.2,670.6 827.4,670.3 829.6,670.7 831.8,669.8 834.0,669.8 836.2,669.1 838.4,669.0 840.6,668.3 842.8,668.6 845.0,668.6 847.2,669.9 849.4,670.0 851.6,669.9 853.8,669.7 856.0,669.5 858.2,667.6 860.4,668.4 862.6,667.5 864.8,667.3 867.0,667.5 869.2,666.9 871.4,667.0 872.5,667.0 872.5,680 15.6,680" fill="#edf4fd"/>
<polyline points="15.6,658.4 17.8,658.4 20.0,659.4 22.2,658.9 24.4,659.8 26.6,661.0 28.8,662.6 31.0,663.2 33.2,662.4 35.4,662.8 37.6,662.0 39.8,661.9 42.0,662.2 44.2,662.7 46.4,661.6 48.6,661.7 50.8,662.2 53.0,662.5 55.2,661.8 57.4,661.4 59.6,662.1 61.8,660.6 64.0,662.9 66.2,663.4 68.4,662.3 70.6,660.0 72.8,657.9 75.0,656.3 77.2,654.3 79.4,654.8 81.6,654.7 83.8,654.3 86.0,654.4 88.2,653.6 90.4,653.5 92.6,653.6 94.8,654.4 97.0,654.4 99.2,654.5 101.4,655.2 103.6,655.3 105.8,655.4 108.0,657.1 110.2,658.3 112.4,658.9 114.6,659.8 116.8,659.8 119.0,660.3 121.2,660.2 123.4,659.2 125.6,659.6 127.8,657.8 130.0,657.8 132.2,658.5 134.4,657.8 136.6,658.5 138.8,657.2 141.0,655.2 143.2,655.0 145.4,657.1 147.6,659.7 149.8,659.3 152.0,660.1 154.2,659.9 156.4,659.7 158.6,659.4 160.8,659.8 163.0,659.8 165.2,660.7 167.4,662.2 169.6,661.7 171.8,663.0 174.0,664.6 176.2,665.5 178.4,663.9 180.6,662.1 182.8,662.2 185.0,662.5 187.2,661.5 189.4,661.9 191.6,661.1 193.8,660.6 196.0,660.1 198.2,660.8 200.4,659.8 202.6,659.9 204.8,660.0 207.0,660.6 209.2,659.4 211.4,660.4 213.6,661.8 215.8,662.2 218.0,662.1 220.2,662.2 222.4,661.7 224.6,662.2 226.8,662.5 229.0,663.6 231.2,664.1 233.4,663.2 235.6,663.4 237.8,663.7 240.0,663.4 242.2,663.2 244.4,662.7 246.6,662.4 248.8,662.6 251.0,663.7 253.2,663.9 255.4,663.7 257.6,663.8 259.8,663.0 262.0,662.3 264.2,661.9 266.4,661.7 268.6,660.6 270.8,661.6 273.0,661.1 275.2,661.0 277.4,660.7 279.6,659.8 281.8,659.6 284.0,659.1 286.2,660.1 288.4,659.5 290.6,659.8 292.8,660.2 295.0,660.3 297.2,660.9 299.4,660.9 301.6,661.2 303.8,661.8 306.0,662.1 308.2,662.8 310.4,662.7 312.6,664.4 314.8,665.0 317.0,664.2 319.2,662.4 321.4,660.7 323.6,660.5 325.8,659.9 328.0,660.7 330.2,660.7 332.4,659.7 334.6,659.6 336.8,659.0 339.0,659.0 341.2,659.4 343.4,659.3 345.6,660.1 347.8,659.1 350.0,658.9 352.2,661.4 354.4,662.2 356.6,662.2 358.8,662.4 361.0,661.4 363.2,661.7 365.4,661.2 367.6,659.9 369.8,659.5 372.0,659.0 374.2,659.3 376.4,659.2 378.6,660.2 380.8,659.9 383.0,660.1 385.2,659.3 387.4,659.0 389.6,659.7 391.8,659.8 394.0,659.5 396.2,659.4 398.4,659.3 400.6,659.2 402.8,658.4 405.0,658.7 407.2,658.4 409.4,657.3 411.6,656.7 413.8,656.3 416.0,656.8 418.2,658.0 420.4,657.4 422.6,654.9 424.8,653.8 427.0,653.2 429.2,652.7 431.4,651.5 433.6,650.9 435.8,650.6 438.0,650.8 440.2,651.0 442.4,651.7 444.6,652.3 446.8,652.4 449.0,652.0 451.2,652.3 453.4,652.5 455.6,651.6 457.8,652.4 460.0,652.8 462.2,652.5 464.4,648.5 466.6,645.2 468.8,645.0 471.0,646.0 473.2,645.6 475.4,646.4 477.6,646.9 479.8,646.2 482.0,646.1 484.2,646.7 486.4,646.3 488.6,645.3 490.8,645.0 493.0,644.3 495.2,644.6 497.4,643.7 499.6,643.1 501.8,644.7 504.0,645.5 506.2,645.4 508.4,645.0 510.6,645.3 512.8,644.7 515.0,644.5 517.2,645.9 519.4,645.6 521.6,645.4 523.8,646.1 526.0,645.5 528.2,646.1 530.4,646.1 532.6,645.5 534.8,645.8 537.0,646.1 539.2,646.3 541.4,647.0 543.6,646.2 545.8,646.0 548.0,645.3 550.2,646.8 552.4,646.6 554.6,647.4 556.8,648.3 559.0,649.4 561.2,649.4 563.4,648.9 565.6,647.0 567.8,646.0 570.0,646.9 572.2,647.1 574.4,648.4 576.6,647.9 578.8,647.4 581.0,648.4 583.2,647.3 585.4,647.4 587.6,647.3 589.8,646.7 592.0,645.9 594.2,645.7 596.4,645.4 598.6,645.0 600.8,643.3 603.0,643.2 605.2,642.2 607.4,642.3 609.6,643.0 611.8,642.6 614.0,642.7 616.2,643.0 618.4,643.1 620.6,642.3 622.8,642.5 625.0,642.2 627.2,642.1 629.4,642.8 631.6,642.9 633.8,643.5 636.0,643.8 638.2,656.7 640.4,662.4 642.6,666.6 644.8,670.7 647.0,667.9 649.2,665.7 651.4,663.5 653.6,662.9 655.8,661.4 658.0,662.2 660.2,664.1 662.4,663.0 664.6,662.5 666.8,664.4 669.0,667.3 671.2,666.5 673.4,665.3 675.6,662.9 677.8,663.5 680.0,663.3 682.2,662.4 684.4,663.2 686.6,663.2 688.8,662.1 691.0,663.5 693.2,663.1 695.4,663.6 697.6,664.7 699.8,664.9 702.0,664.4 704.2,665.1 706.4,665.6 708.6,665.8 710.8,665.9 713.0,666.4 715.2,667.3 717.4,666.1 719.6,666.6 721.8,666.2 724.0,665.3 726.2,665.5 728.4,665.7 730.6,665.4 732.8,665.5 735.0,667.5 737.2,668.0 739.4,669.0 741.6,668.5 743.8,669.2 746.0,668.5 748.2,669.3 750.4,668.2 752.6,667.7 754.8,667.8 757.0,668.6 759.2,668.8 761.4,668.5 763.6,668.7 765.8,670.2 768.0,670.0 770.2,670.6 772.4,670.1 774.6,670.4 776.8,671.6 779.0,671.6 781.2,671.5 783.4,672.7 785.6,672.3 787.8,672.5 790.0,671.5 792.2,672.6 794.4,671.5 796.6,672.6 798.8,672.0 801.0,671.9 803.2,672.2 805.4,672.7 807.6,671.8 809.8,671.6 812.0,672.1 814.2,671.7 816.4,671.4 818.6,671.2 820.8,670.8 823.0,670.7 825.2,670.6 827.4,670.3 829.6,670.7 831.8,669.8 834.0,669.8 836.2,669.1 838.4,669.0 840.6,668.3 842.8,668.6 845.0,668.6 847.2,669.9 849.4,670.0 851.6,669.9 853.8,669.7 856.0,669.5 858.2,667.6 860.4,668.4 862.6,667.5 864.8,667.3 867.0,667.5 869.2,666.9 871.4,667.0 872.5,667.0" fill="none" stroke="#a4c6ef" stroke-width="1.1" stroke-linejoin="round" />
<line x1="15.5" x2="15.5" y1="638" y2="676" stroke="#c2c2c2" stroke-width="1" shape-rendering="crispEdges"/>
<text x="17.3" y="677.6" font-size="10.4" fill="#b8b8b8" >06/02</text>
<line x1="64.5" x2="64.5" y1="638" y2="676" stroke="#c2c2c2" stroke-width="1" shape-rendering="crispEdges"/>
<text x="66.3" y="677.6" font-size="10.4" fill="#b8b8b8" >07/02</text>
<line x1="114.5" x2="114.5" y1="638" y2="676" stroke="#c2c2c2" stroke-width="1" shape-rendering="crispEdges"/>
<text x="116.3" y="677.6" font-size="10.4" fill="#b8b8b8" >08/02</text>
<line x1="164.5" x2="164.5" y1="638" y2="676" stroke="#c2c2c2" stroke-width="1" shape-rendering="crispEdges"/>
<text x="166.3" y="677.6" font-size="10.4" fill="#b8b8b8" >10/02</text>
<line x1="215.5" x2="215.5" y1="638" y2="676" stroke="#c2c2c2" stroke-width="1" shape-rendering="crispEdges"/>
<text x="217.3" y="677.6" font-size="10.4" fill="#b8b8b8" >13/02</text>
<line x1="264.5" x2="264.5" y1="638" y2="676" stroke="#c2c2c2" stroke-width="1" shape-rendering="crispEdges"/>
<text x="266.3" y="677.6" font-size="10.4" fill="#b8b8b8" >15/02</text>
<line x1="314.5" x2="314.5" y1="638" y2="676" stroke="#c2c2c2" stroke-width="1" shape-rendering="crispEdges"/>
<text x="316.3" y="677.6" font-size="10.4" fill="#b8b8b8" >16/02</text>
<line x1="365.5" x2="365.5" y1="638" y2="676" stroke="#c2c2c2" stroke-width="1" shape-rendering="crispEdges"/>
<text x="367.3" y="677.6" font-size="10.4" fill="#b8b8b8" >19/02</text>
<line x1="415.5" x2="415.5" y1="638" y2="676" stroke="#c2c2c2" stroke-width="1" shape-rendering="crispEdges"/>
<text x="417.3" y="677.6" font-size="10.4" fill="#b8b8b8" >21/02</text>
<line x1="464.5" x2="464.5" y1="638" y2="676" stroke="#c2c2c2" stroke-width="1" shape-rendering="crispEdges"/>
<text x="466.3" y="677.6" font-size="10.4" fill="#b8b8b8" >22/02</text>
<line x1="514.5" x2="514.5" y1="638" y2="676" stroke="#c2c2c2" stroke-width="1" shape-rendering="crispEdges"/>
<text x="516.3" y="677.6" font-size="10.4" fill="#b8b8b8" >24/02</text>
<line x1="565.5" x2="565.5" y1="638" y2="676" stroke="#c2c2c2" stroke-width="1" shape-rendering="crispEdges"/>
<text x="567.3" y="677.6" font-size="10.4" fill="#b8b8b8" >27/02</text>
<line x1="615.5" x2="615.5" y1="638" y2="676" stroke="#c2c2c2" stroke-width="1" shape-rendering="crispEdges"/>
<text x="617.3" y="677.6" font-size="10.4" fill="#b8b8b8" >29/02</text>
<line x1="664.5" x2="664.5" y1="638" y2="676" stroke="#c2c2c2" stroke-width="1" shape-rendering="crispEdges"/>
<text x="666.3" y="677.6" font-size="10.4" fill="#b8b8b8" >01/03</text>
<line x1="714.5" x2="714.5" y1="638" y2="676" stroke="#c2c2c2" stroke-width="1" shape-rendering="crispEdges"/>
<text x="716.3" y="677.6" font-size="10.4" fill="#b8b8b8" >02/03</text>
<line x1="765.5" x2="765.5" y1="638" y2="676" stroke="#c2c2c2" stroke-width="1" shape-rendering="crispEdges"/>
<text x="767.3" y="677.6" font-size="10.4" fill="#b8b8b8" >06/03</text>
<line x1="815.5" x2="815.5" y1="638" y2="676" stroke="#c2c2c2" stroke-width="1" shape-rendering="crispEdges"/>
<text x="817.3" y="677.6" font-size="10.4" fill="#b8b8b8" >07/03</text>
<text x="17.1" y="650.7" font-size="11.0" fill="#bebebe" >2012</text>
<rect x="865.5" y="664" width="3" height="12" fill="#cfe5fb"/>
<line x1="861.2" x2="861.2" y1="638" y2="676" stroke="#222" stroke-width="1.4"/>
<line x1="865.5" x2="865.5" y1="638" y2="676" stroke="#222" stroke-width="0.9"/>
<line x1="872.4" x2="872.4" y1="638" y2="676" stroke="#111" stroke-width="1.6"/>
<defs><linearGradient id="hg" x1="0" x2="1" y1="0" y2="0"><stop offset="0" stop-color="#f4f4f4"/><stop offset="1" stop-color="#d8d8d8"/></linearGradient><clipPath id="nc"><rect x="0" y="630" width="873.2" height="50"/></clipPath></defs>
<rect x="857.3" y="650.3" width="8" height="20" rx="2" fill="url(#hg)" stroke="#333" stroke-width="1.2"/>
<rect x="860.1" y="657.6" width="2.9" height="0.9" fill="#333"/>
<rect x="860.1" y="659.8" width="2.9" height="0.9" fill="#333"/>
<rect x="860.1" y="661.9" width="2.9" height="0.9" fill="#333"/>
<g clip-path="url(#nc)"><rect x="868.3" y="650.3" width="8" height="20" rx="2" fill="url(#hg)" stroke="#333" stroke-width="1.2"/>
<rect x="871" y="657.6" width="2.9" height="0.9" fill="#333"/>
<rect x="871" y="659.8" width="2.9" height="0.9" fill="#333"/>
<rect x="871" y="661.9" width="2.9" height="0.9" fill="#333"/>
</g>
</svg>
<!--BOTTOM-->
<div class="abs" style="left:15px;top:667px;width:12.5px;height:12px;border:1px solid #c3d9ee;background:linear-gradient(#f4f9fd,#ddeaf7);"></div>
<svg class="abs" style="left:15px;top:667px" width="14" height="8" viewBox="15 667 14 8">
<path d="M18.2 670.4 L24.6 677 M24.6 670.4 L18.2 677" stroke="#0c2a66" stroke-width="2" fill="none"/>
</svg>
<div class="abs" style="left:902px;top:667px;width:11.7px;height:12px;border:1px solid #b9d2ea;background:#eaf3fb;"></div>
<div class="abs" style="left:928.3px;top:667px;width:11.5px;height:12px;border:1px solid #b9d2ea;background:#eaf3fb;"></div>
<svg class="abs" style="left:900px;top:665px" width="45" height="10" viewBox="900 665 45 10">
<rect x="904.8" y="672.9" width="8" height="3" fill="#0c2a66"/>
<circle cx="921.9" cy="674.4" r="3" fill="#0c2a66"/>
<rect x="933.7" y="669.7" width="2.6" height="8" fill="#0c2a66"/>
<rect x="931" y="672.9" width="8" height="3" fill="#0c2a66"/>
</svg>
</div>
</body></html>
